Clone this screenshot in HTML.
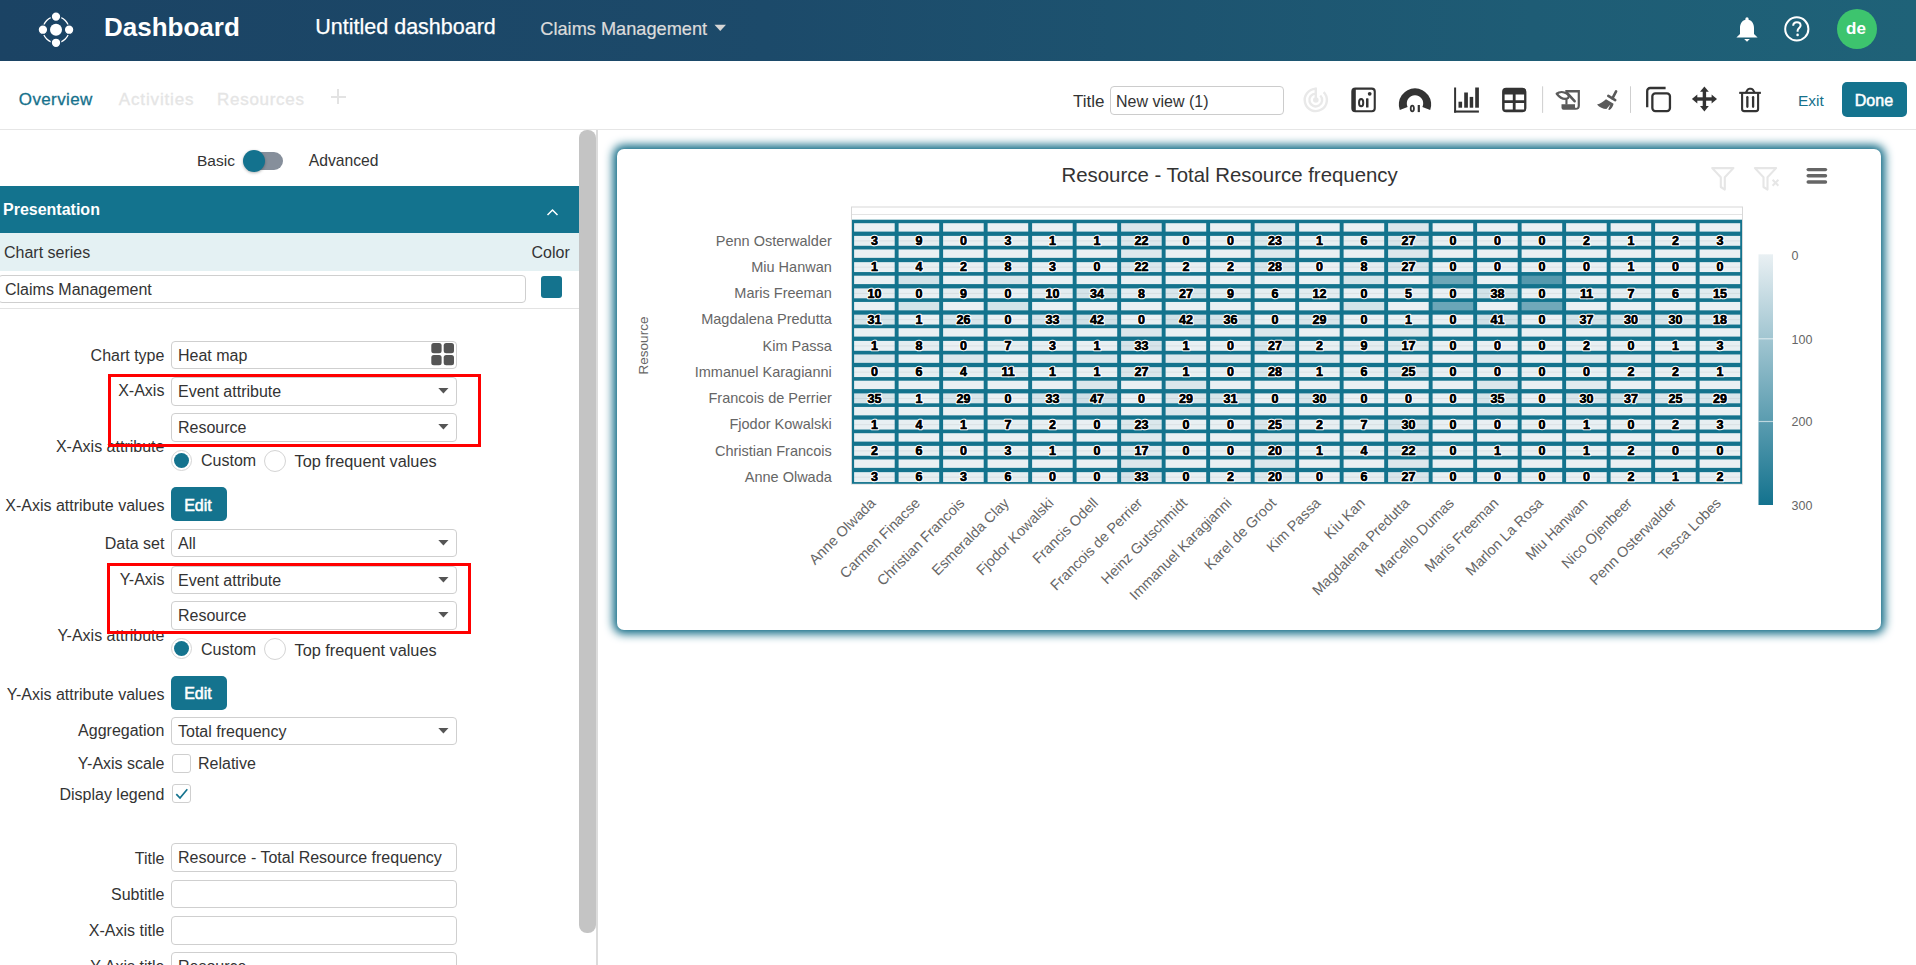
<!DOCTYPE html>
<html><head><meta charset="utf-8"><title>Dashboard</title>
<style>
html,body{margin:0;padding:0;width:1916px;height:965px;overflow:hidden;background:#fff;font-family:"Liberation Sans", sans-serif;}
.t{position:absolute;white-space:nowrap;line-height:1;}
</style></head><body>
<div style="position:absolute;left:0;top:0;width:1916px;height:61px;background:linear-gradient(90deg,#1b4364 0%,#1c4a6a 40%,#1e5c75 80%,#1f6278 100%);"></div>
<svg style="position:absolute;left:0;top:0" width="100" height="61" viewBox="0 0 100 61">
<circle cx="56" cy="29.7" r="13.1" fill="none" stroke="#fff" stroke-width="1.3"/>
<circle cx="56" cy="29.7" r="6" fill="#fff"/>
<circle cx="56" cy="16.6" r="4.85" fill="#fff" stroke="#1b4364" stroke-width="1.4"/>
<circle cx="56" cy="42.8" r="4.85" fill="#fff" stroke="#1b4364" stroke-width="1.4"/>
<circle cx="42.9" cy="29.7" r="4.85" fill="#fff" stroke="#1b4364" stroke-width="1.4"/>
<circle cx="69.1" cy="29.7" r="4.85" fill="#fff" stroke="#1b4364" stroke-width="1.4"/>
</svg>
<div class="t" style="left:104px;top:13.99px;font-size:26px;color:#fff;font-weight:700;">Dashboard</div>
<div class="t" style="left:315.3px;top:16.50px;font-size:21.5px;color:#fff;font-weight:400;-webkit-text-stroke:0.25px #fff;">Untitled dashboard</div>
<div class="t" style="left:540.3px;top:19.89px;font-size:18.2px;color:#dcdcdc;font-weight:400;-webkit-text-stroke:0.2px #dcdcdc;">Claims Management</div>
<svg style="position:absolute;left:714px;top:24px" width="13" height="8"><path d="M0.5 0.8 L12 0.8 L6.25 7 Z" fill="#d6d6d6"/></svg>
<svg style="position:absolute;left:1735px;top:16px" width="24" height="27" viewBox="0 0 24 27">
<path d="M12 1.2 a1.6 1.6 0 0 1 1.6 1.6 l0 0.9 C17.2 4.6 19 8 19 12 L19 18 L22.6 21.6 L1.4 21.6 L5 18 L5 12 C5 8 6.8 4.6 10.4 3.7 L10.4 2.8 A1.6 1.6 0 0 1 12 1.2 Z" fill="#fff"/>
<path d="M9.2 23 L14.8 23 L12 25.8 Z" fill="#fff"/>
</svg>
<svg style="position:absolute;left:1783px;top:15px" width="28" height="28" viewBox="0 0 28 28">
<circle cx="13.8" cy="13.9" r="11.6" fill="none" stroke="#fff" stroke-width="2"/>
<path d="M10.2 10.8 C10.2 8.4 11.9 7.2 13.9 7.2 C16 7.2 17.6 8.5 17.6 10.5 C17.6 12.9 14.6 13.2 14.6 15.8 L14.6 16.8" fill="none" stroke="#fff" stroke-width="2"/>
<circle cx="14.6" cy="19.9" r="1.3" fill="#fff"/>
</svg>
<div style="position:absolute;left:1837px;top:8.9px;width:40px;height:40px;border-radius:50%;background:#3dc46e;"></div>
<div class="t" style="left:1846px;top:20.41px;font-size:17px;color:#fff;font-weight:700;">de</div>
<div style="position:absolute;left:0;top:129px;width:1916px;height:1px;background:#e6e6e6;"></div>
<div class="t" style="left:18.8px;top:91.21px;font-size:17px;color:#16718c;font-weight:400;letter-spacing:0.38px;-webkit-text-stroke:0.3px #16718c;">Overview</div>
<div class="t" style="left:118.8px;top:91.21px;font-size:17px;color:#e5e5e5;font-weight:400;letter-spacing:0.85px;-webkit-text-stroke:0.3px #e5e5e5;">Activities</div>
<div class="t" style="left:217.1px;top:91.21px;font-size:17px;color:#e5e5e5;font-weight:400;letter-spacing:0.7px;-webkit-text-stroke:0.3px #e5e5e5;">Resources</div>
<div style="position:absolute;left:330.5px;top:96px;width:15px;height:1.6px;background:#e3e3e3;"></div>
<div style="position:absolute;left:337.2px;top:89px;width:1.6px;height:15px;background:#e3e3e3;"></div>
<div class="t" style="left:1073px;top:93.11px;font-size:17px;color:#333;font-weight:400;">Title</div>
<div style="position:absolute;left:1109.5px;top:86.3px;width:173px;height:28px;border:1px solid #cccccc;border-radius:4px;box-sizing:border-box;width:174px;height:29px;"></div>
<div class="t" style="left:1116px;top:94.36px;font-size:16px;color:#333;font-weight:400;">New view (1)</div>
<svg style="position:absolute;left:0;top:0;pointer-events:none" width="1916" height="130" viewBox="0 0 1916 130">
<g fill="none" stroke="#e9e9e9" stroke-width="2.4">
  <path d="M1315.8 88.9 A11.1 11.1 0 1 0 1323.6 92.1"/>
  <path d="M1315.8 93.6 A6.4 6.4 0 1 0 1320.3 95.5"/>
  <line x1="1315.8" y1="87.5" x2="1315.8" y2="100"/>
</g>
<circle cx="1315.8" cy="100" r="2.8" fill="#e9e9e9"/>
<g fill="#333">
  <path fill-rule="evenodd" d="M1355.3 87.6 H1371.8 A4 4 0 0 1 1375.8 91.6 V108.2 A4 4 0 0 1 1371.8 112.2 H1355.3 A4 4 0 0 1 1351.3 108.2 V91.6 A4 4 0 0 1 1355.3 87.6 Z M1355.8 89.8 V110.2 H1371.7 A2 2 0 0 0 1373.7 108.2 V91.8 A2 2 0 0 0 1371.7 89.8 Z"/>
  <circle cx="1369.7" cy="93.8" r="1.9"/>
  <ellipse cx="1361.15" cy="102.65" rx="2.1" ry="3.6" fill="none" stroke="#333" stroke-width="2"/>
  <rect x="1366" y="98.3" width="2.5" height="9.2" rx="0.6"/>
  <path d="M1399.8 110.1 A16.2 16.2 0 1 1 1430.2 110.1 L1422.4 106.9 A8.2 8.2 0 1 0 1407.6 106.9 Z"/>
  <ellipse cx="1412.3" cy="108.5" rx="1.6" ry="2.9" fill="none" stroke="#333" stroke-width="1.8"/>
  <rect x="1417.7" y="105" width="2.2" height="7.1"/>
  <rect x="1454.1" y="87.5" width="2" height="25.1"/>
  <rect x="1454.1" y="110.5" width="24.8" height="2.1"/>
  <rect x="1458.5" y="101.7" width="3.6" height="6"/>
  <rect x="1464.2" y="92.5" width="3.7" height="15.2"/>
  <rect x="1469.7" y="96.9" width="3.5" height="10.8"/>
  <rect x="1475.2" y="87.5" width="3.7" height="20.2"/>
  <path fill-rule="evenodd" d="M1506.1 87.8 H1522.4 A4 4 0 0 1 1526.4 91.8 V108.2 A4 4 0 0 1 1522.4 112.2 H1506.1 A4 4 0 0 1 1502.1 108.2 V91.8 A4 4 0 0 1 1506.1 87.8 Z M1504.6 94.4 V100.2 H1512.8 V94.4 Z M1515.6 94.4 V100.2 H1524.1 V94.4 Z M1504.6 103 V109.6 H1512.8 V103 Z M1515.6 103 V109.6 H1524.1 V103 Z"/>
</g>
<rect x="1542.1" y="86.3" width="1" height="26.6" fill="#cfcfcf"/>
<rect x="1630" y="86.3" width="1" height="26.6" fill="#cfcfcf"/>
<g fill="#5a5a5a" stroke="none">
  <path d="M1565.3 90.1 H1579.9 V105.5 Q1579.9 109.8 1575.6 109.8 H1563.5 Q1561.5 109.8 1561.5 107.8 V104.2 H1575 V107 Q1575 107.9 1576 107.9 Q1577.7 107.9 1577.7 106 V92.4 H1565.3 Z"/>
  <rect x="1565.4" y="98.8" width="2.1" height="5.8"/>
</g>
<g fill="none" stroke="#5a5a5a" stroke-linecap="round">
  <line x1="1567" y1="92.8" x2="1574.6" y2="101.2" stroke-width="2.6"/>
  <path d="M1556.7 93.7 C1559.5 91.4 1563.8 91.6 1566.8 93.6 C1569.6 95.4 1569.2 98.1 1566.6 98.7 C1563.2 99.4 1559.6 97.4 1556.7 93.7 Z" stroke-width="2.2" stroke-linejoin="round"/>
  <line x1="1616.1" y1="91.3" x2="1612.4" y2="98.4" stroke-width="2.6"/>
  <line x1="1608.3" y1="95.9" x2="1615.2" y2="100.1" stroke-width="2.6"/>
</g>
<path fill="#5a5a5a" d="M1597 104.4 C1600.5 104 1603 101.6 1606 99.3 L1613.6 103.8 C1613 106.6 1611.5 109 1609.4 109.9 L1608.2 109.6 L1610.4 104.6 L1606.4 109.1 C1603 108.8 1599.6 107.3 1597 104.4 Z"/>
<g fill="none" stroke="#333" stroke-width="2.3">
  <path d="M1647.2 107.3 V91 A3 3 0 0 1 1650.2 88 H1665.6"/>
  <rect x="1652.35" y="93.35" width="17.6" height="17.7" rx="3"/>
</g>
<g fill="#333">
  <rect x="1702.7" y="90" width="3.4" height="18"/>
  <rect x="1695" y="97.3" width="18.8" height="3.4"/>
  <path d="M1704.4 86.4 L1708.8 91.8 L1700 91.8 Z"/>
  <path d="M1704.4 111.5 L1708.8 106.1 L1700 106.1 Z"/>
  <path d="M1691.9 99 L1697.3 94.6 L1697.3 103.4 Z"/>
  <path d="M1717 99 L1711.6 94.6 L1711.6 103.4 Z"/>
</g>
<g fill="none" stroke="#333" stroke-width="2.1">
  <line x1="1739.2" y1="92.85" x2="1760.9" y2="92.85"/>
  <path d="M1746 92.5 L1747.6 89.8 Q1748.2 88.8 1749.4 88.8 H1751.1 Q1752.3 88.8 1752.9 89.8 L1754.5 92.5"/>
  <path d="M1742.1 93 V109 Q1742.1 111.1 1744.2 111.1 H1756 Q1758.1 111.1 1758.1 109 V93"/>
</g>
<g stroke="#333" stroke-width="2.3" stroke-linecap="round">
  <line x1="1747.35" y1="97.2" x2="1747.35" y2="106.8"/>
  <line x1="1753.1" y1="97.2" x2="1753.1" y2="106.8"/>
</g>
</svg>
<div class="t" style="left:1798px;top:92.88px;font-size:15.5px;color:#16718c;font-weight:400;">Exit</div>
<div style="position:absolute;left:1842px;top:82.2px;width:65px;height:34.6px;border-radius:5px;background:#14738e;"></div>
<div class="t" style="left:1854.8px;top:92.66px;font-size:16px;color:#fff;font-weight:400;-webkit-text-stroke:0.55px #fff;">Done</div>
<div class="t" style="left:197px;top:153.48px;font-size:15.5px;color:#333;font-weight:400;">Basic</div>
<div style="position:absolute;left:246.4px;top:152px;width:36.5px;height:17.7px;border-radius:9px;background:#868f9b;"></div>
<div style="position:absolute;left:243px;top:150px;width:22px;height:22px;border-radius:50%;background:#13728e;box-shadow:0 1px 3px rgba(0,0,0,0.3);"></div>
<div class="t" style="left:308.8px;top:153.31px;font-size:15.7px;color:#333;font-weight:400;">Advanced</div>
<div style="position:absolute;left:0;top:186px;width:579px;height:46.7px;background:#13738e;"></div>
<div class="t" style="left:3px;top:202.46px;font-size:16px;color:#fff;font-weight:700;">Presentation</div>
<svg style="position:absolute;left:546px;top:207px" width="13" height="10"><path d="M1.5 8 L6.5 3 L11.5 8" fill="none" stroke="#fff" stroke-width="1.5"/></svg>
<div style="position:absolute;left:0;top:232.7px;width:579px;height:38.2px;background:#e4f1f3;"></div>
<div class="t" style="left:4px;top:244.86px;font-size:16px;color:#333;font-weight:400;">Chart series</div>
<div class="t" style="left:531.5px;top:244.86px;font-size:16px;color:#333;font-weight:400;">Color</div>
<div style="position:absolute;left:-2px;top:274.7px;width:527.5px;height:28.5px;border:1px solid #cfcfcf;border-radius:4px;box-sizing:border-box;background:#fff;"></div>
<div class="t" style="left:5px;top:281.96px;font-size:16px;color:#333;font-weight:400;">Claims Management</div>
<div style="position:absolute;left:541.2px;top:276.3px;width:21.3px;height:21.3px;border-radius:3px;background:#14738e;"></div>
<div style="position:absolute;left:0;top:308px;width:579px;height:1px;background:#e3e3e3;"></div>
<div class="t" style="left:-835.6px;width:1000px;text-align:right;top:347.56px;font-size:16px;color:#333;font-weight:400;">Chart type</div>
<div style="position:absolute;left:171.4px;top:340.6px;width:286.0px;height:28.6px;border:1px solid #cfcfcf;border-radius:4px;box-sizing:border-box;background:#fff;"></div><div class="t" style="left:178px;top:347.66px;font-size:16px;color:#333;font-weight:400;">Heat map</div><svg style="position:absolute;left:431px;top:343.20000000000005px" width="24" height="23"><g fill="#555">
<rect x="0.3" y="0" width="10.3" height="10.3" rx="2.5"/><rect x="12.7" y="0" width="10.3" height="10.3" rx="2.5"/>
<rect x="0.3" y="12" width="10.3" height="10.3" rx="2.5"/><rect x="12.7" y="12" width="10.3" height="10.3" rx="2.5"/></g></svg>
<div class="t" style="left:-835.6px;width:1000px;text-align:right;top:383.26px;font-size:16px;color:#333;font-weight:400;">X-Axis</div>
<div style="position:absolute;left:171.4px;top:377.4px;width:286.0px;height:28.6px;border:1px solid #cfcfcf;border-radius:4px;box-sizing:border-box;background:#fff;"></div><div class="t" style="left:178px;top:384.46px;font-size:16px;color:#333;font-weight:400;">Event attribute</div><svg style="position:absolute;left:437.5px;top:388.4px" width="11" height="6"><path d="M0.3 0 L10.5 0 L5.4 5.6 Z" fill="#555"/></svg>
<div style="position:absolute;left:171.4px;top:413.2px;width:286.0px;height:28.6px;border:1px solid #cfcfcf;border-radius:4px;box-sizing:border-box;background:#fff;"></div><div class="t" style="left:178px;top:420.26px;font-size:16px;color:#333;font-weight:400;">Resource</div><svg style="position:absolute;left:437.5px;top:424.2px" width="11" height="6"><path d="M0.3 0 L10.5 0 L5.4 5.6 Z" fill="#555"/></svg>
<div class="t" style="left:-835.6px;width:1000px;text-align:right;top:439.26px;font-size:16px;color:#333;font-weight:400;">X-Axis attribute</div>
<div style="position:absolute;left:171.4px;top:449.7px;width:21px;height:21px;border-radius:50%;border:1px solid #d4d4d4;box-sizing:border-box;background:#fff;"></div><div style="position:absolute;left:174.4px;top:452.7px;width:15px;height:15px;border-radius:50%;background:#14738e;"></div><div class="t" style="left:201px;top:453.26px;font-size:16px;color:#333;font-weight:400;">Custom</div><div style="position:absolute;left:264px;top:449.7px;width:22px;height:22px;border-radius:50%;border:1px solid #d4d4d4;box-sizing:border-box;background:#fff;"></div><div class="t" style="left:294.5px;top:453.00px;font-size:16.3px;color:#333;font-weight:400;">Top frequent values</div>
<div class="t" style="left:-835.6px;width:1000px;text-align:right;top:497.96px;font-size:16px;color:#333;font-weight:400;">X-Axis attribute values</div>
<div style="position:absolute;left:171.1px;top:487px;width:55.7px;height:34px;border-radius:5px;background:#14738e;"></div><div class="t" style="left:184.2px;top:497.66px;font-size:16px;color:#fff;font-weight:400;-webkit-text-stroke:0.55px #fff;">Edit</div>
<div class="t" style="left:-835.6px;width:1000px;text-align:right;top:535.56px;font-size:16px;color:#333;font-weight:400;">Data set</div>
<div style="position:absolute;left:171.4px;top:528.5px;width:286.0px;height:28.6px;border:1px solid #cfcfcf;border-radius:4px;box-sizing:border-box;background:#fff;"></div><div class="t" style="left:178px;top:535.56px;font-size:16px;color:#333;font-weight:400;">All</div><svg style="position:absolute;left:437.5px;top:539.5px" width="11" height="6"><path d="M0.3 0 L10.5 0 L5.4 5.6 Z" fill="#555"/></svg>
<div class="t" style="left:-835.6px;width:1000px;text-align:right;top:572.16px;font-size:16px;color:#333;font-weight:400;">Y-Axis</div>
<div style="position:absolute;left:171.4px;top:565.6px;width:286.0px;height:28.6px;border:1px solid #cfcfcf;border-radius:4px;box-sizing:border-box;background:#fff;"></div><div class="t" style="left:178px;top:572.66px;font-size:16px;color:#333;font-weight:400;">Event attribute</div><svg style="position:absolute;left:437.5px;top:576.6px" width="11" height="6"><path d="M0.3 0 L10.5 0 L5.4 5.6 Z" fill="#555"/></svg>
<div style="position:absolute;left:171.4px;top:601.4px;width:286.0px;height:28.6px;border:1px solid #cfcfcf;border-radius:4px;box-sizing:border-box;background:#fff;"></div><div class="t" style="left:178px;top:608.46px;font-size:16px;color:#333;font-weight:400;">Resource</div><svg style="position:absolute;left:437.5px;top:612.4px" width="11" height="6"><path d="M0.3 0 L10.5 0 L5.4 5.6 Z" fill="#555"/></svg>
<div class="t" style="left:-835.6px;width:1000px;text-align:right;top:627.66px;font-size:16px;color:#333;font-weight:400;">Y-Axis attribute</div>
<div style="position:absolute;left:171.4px;top:638.2px;width:21px;height:21px;border-radius:50%;border:1px solid #d4d4d4;box-sizing:border-box;background:#fff;"></div><div style="position:absolute;left:174.4px;top:641.2px;width:15px;height:15px;border-radius:50%;background:#14738e;"></div><div class="t" style="left:201px;top:641.76px;font-size:16px;color:#333;font-weight:400;">Custom</div><div style="position:absolute;left:264px;top:638.2px;width:22px;height:22px;border-radius:50%;border:1px solid #d4d4d4;box-sizing:border-box;background:#fff;"></div><div class="t" style="left:294.5px;top:641.50px;font-size:16.3px;color:#333;font-weight:400;">Top frequent values</div>
<div class="t" style="left:-835.6px;width:1000px;text-align:right;top:686.56px;font-size:16px;color:#333;font-weight:400;">Y-Axis attribute values</div>
<div style="position:absolute;left:171.1px;top:675.8px;width:55.7px;height:34px;border-radius:5px;background:#14738e;"></div><div class="t" style="left:184.2px;top:686.46px;font-size:16px;color:#fff;font-weight:400;-webkit-text-stroke:0.55px #fff;">Edit</div>
<div class="t" style="left:-835.6px;width:1000px;text-align:right;top:723.46px;font-size:16px;color:#333;font-weight:400;">Aggregation</div>
<div style="position:absolute;left:171.4px;top:716.5px;width:286.0px;height:28.6px;border:1px solid #cfcfcf;border-radius:4px;box-sizing:border-box;background:#fff;"></div><div class="t" style="left:178px;top:723.56px;font-size:16px;color:#333;font-weight:400;">Total frequency</div><svg style="position:absolute;left:437.5px;top:727.5px" width="11" height="6"><path d="M0.3 0 L10.5 0 L5.4 5.6 Z" fill="#555"/></svg>
<div class="t" style="left:-835.6px;width:1000px;text-align:right;top:756.46px;font-size:16px;color:#333;font-weight:400;">Y-Axis scale</div>
<div style="position:absolute;left:171.6px;top:753.5px;width:19.3px;height:19.3px;border:1px solid #cfcfcf;border-radius:3px;box-sizing:border-box;background:#fff;"></div>
<div class="t" style="left:198px;top:756.46px;font-size:16px;color:#333;font-weight:400;">Relative</div>
<div class="t" style="left:-835.6px;width:1000px;text-align:right;top:787.46px;font-size:16px;color:#333;font-weight:400;">Display legend</div>
<div style="position:absolute;left:171.6px;top:783.7px;width:19.3px;height:19.3px;border:1px solid #cfcfcf;border-radius:3px;box-sizing:border-box;background:#fff;"></div>
<svg style="position:absolute;left:171.6px;top:783.7px" width="20" height="20"><path d="M4.3 10.2 L8 14 L15.3 5.3" fill="none" stroke="#14738e" stroke-width="1.7"/></svg>
<div class="t" style="left:-835.6px;width:1000px;text-align:right;top:850.66px;font-size:16px;color:#333;font-weight:400;">Title</div>
<div style="position:absolute;left:171.4px;top:843.3px;width:286.0px;height:28.6px;border:1px solid #cfcfcf;border-radius:4px;box-sizing:border-box;background:#fff;"></div><div class="t" style="left:178px;top:850.36px;font-size:16px;color:#333;font-weight:400;">Resource - Total Resource frequency</div>
<div class="t" style="left:-835.6px;width:1000px;text-align:right;top:886.96px;font-size:16px;color:#333;font-weight:400;">Subtitle</div>
<div style="position:absolute;left:171.4px;top:879.8px;width:286.0px;height:28.6px;border:1px solid #cfcfcf;border-radius:4px;box-sizing:border-box;background:#fff;"></div>
<div class="t" style="left:-835.6px;width:1000px;text-align:right;top:922.96px;font-size:16px;color:#333;font-weight:400;">X-Axis title</div>
<div style="position:absolute;left:171.4px;top:916.1px;width:286.0px;height:28.6px;border:1px solid #cfcfcf;border-radius:4px;box-sizing:border-box;background:#fff;"></div>
<div class="t" style="left:-835.6px;width:1000px;text-align:right;top:958.96px;font-size:16px;color:#333;font-weight:400;">Y-Axis title</div>
<div style="position:absolute;left:171.4px;top:952.3px;width:286.0px;height:28.6px;border:1px solid #cfcfcf;border-radius:4px;box-sizing:border-box;background:#fff;"></div><div class="t" style="left:178px;top:959.36px;font-size:16px;color:#333;font-weight:400;">Resource</div>
<div style="position:absolute;left:107.6px;top:373.8px;width:373.8px;height:73.1px;border:3px solid #ff0000;box-sizing:border-box;"></div>
<div style="position:absolute;left:106.9px;top:562.8px;width:364.5px;height:70.9px;border:3px solid #ff0000;box-sizing:border-box;"></div>
<div style="position:absolute;left:579.3px;top:130px;width:16.4px;height:802.7px;border-radius:8px 8px 8px 8px;background:#c4c4c4;"></div>
<div style="position:absolute;left:596px;top:130px;width:1.6px;height:835px;background:#dcdcdc;"></div>
<div style="position:absolute;left:617px;top:148.6px;width:1264.2px;height:481.6px;border-radius:7px;background:#fff;box-shadow:0 0 10px 4px rgb(15,106,133);"></div>
<div class="t" style="left:1061.5px;top:164.63px;font-size:20.4px;color:#333;font-weight:400;">Resource - Total Resource frequency</div>
<svg style="position:absolute;left:1700px;top:155px" width="140" height="45" viewBox="1700 155 140 45">
<g fill="none" stroke="#e6e6e6" stroke-width="2.1" stroke-linejoin="round">
 <path d="M1712.2 168.1 H1733.4 L1724.8 177.3 V189.6 L1720.8 187 V177.3 Z"/>
 <path d="M1754.9 168.1 H1776.1 L1767.5 177.3 V189.6 L1763.5 187 V177.3 Z"/>
</g>
<g stroke="#e6e6e6" stroke-width="2" >
 <line x1="1772.6" y1="179.7" x2="1778.4" y2="185.8"/><line x1="1778.4" y1="179.7" x2="1772.6" y2="185.8"/>
</g>
<g stroke="#666" stroke-width="3.4" stroke-linecap="round">
 <line x1="1808.2" y1="169.6" x2="1825.5" y2="169.6"/>
 <line x1="1808.2" y1="175.8" x2="1825.5" y2="175.8"/>
 <line x1="1808.2" y1="182" x2="1825.5" y2="182"/>
</g>
</svg>
<svg style="position:absolute;left:0;top:0" width="1916" height="965" viewBox="0 0 1916 965">
<rect x="851.5" y="207" width="891" height="277" fill="#fff" stroke="#d8d8d8" stroke-width="1"/>
<line x1="852" y1="214.5" x2="1742" y2="214.5" stroke="#e4e4e4" stroke-width="1"/>
<rect x="852" y="219.7" width="890" height="264.1" fill="#13738d"/>
<rect x="854.10" y="223.20" width="40.6" height="8.4" fill="#e9f0f3"/>
<rect x="854.10" y="235.90" width="40.6" height="9.9" fill="#e7eff2"/>
<rect x="854.10" y="240.40" width="40.6" height="1" fill="rgba(0,0,0,0.06)"/>
<rect x="898.60" y="223.20" width="40.6" height="8.4" fill="#e9f0f3"/>
<rect x="898.60" y="235.90" width="40.6" height="9.9" fill="#e4edf0"/>
<rect x="898.60" y="240.40" width="40.6" height="1" fill="rgba(0,0,0,0.06)"/>
<rect x="943.10" y="223.20" width="40.6" height="8.4" fill="#e9f0f3"/>
<rect x="943.10" y="235.90" width="40.6" height="9.9" fill="#e9f0f3"/>
<rect x="943.10" y="240.40" width="40.6" height="1" fill="rgba(0,0,0,0.06)"/>
<rect x="987.60" y="223.20" width="40.6" height="8.4" fill="#e9f0f3"/>
<rect x="987.60" y="235.90" width="40.6" height="9.9" fill="#e7eff2"/>
<rect x="987.60" y="240.40" width="40.6" height="1" fill="rgba(0,0,0,0.06)"/>
<rect x="1032.10" y="223.20" width="40.6" height="8.4" fill="#e9f0f3"/>
<rect x="1032.10" y="235.90" width="40.6" height="9.9" fill="#e8f0f3"/>
<rect x="1032.10" y="240.40" width="40.6" height="1" fill="rgba(0,0,0,0.06)"/>
<rect x="1076.60" y="223.20" width="40.6" height="8.4" fill="#e9f0f3"/>
<rect x="1076.60" y="235.90" width="40.6" height="9.9" fill="#e8f0f3"/>
<rect x="1076.60" y="240.40" width="40.6" height="1" fill="rgba(0,0,0,0.06)"/>
<rect x="1121.10" y="223.20" width="40.6" height="8.4" fill="#dae7ec"/>
<rect x="1121.10" y="235.90" width="40.6" height="9.9" fill="#dce8ed"/>
<rect x="1121.10" y="240.40" width="40.6" height="1" fill="rgba(0,0,0,0.06)"/>
<rect x="1165.60" y="223.20" width="40.6" height="8.4" fill="#e9f0f3"/>
<rect x="1165.60" y="235.90" width="40.6" height="9.9" fill="#e9f0f3"/>
<rect x="1165.60" y="240.40" width="40.6" height="1" fill="rgba(0,0,0,0.06)"/>
<rect x="1210.10" y="223.20" width="40.6" height="8.4" fill="#e9f0f3"/>
<rect x="1210.10" y="235.90" width="40.6" height="9.9" fill="#e9f0f3"/>
<rect x="1210.10" y="240.40" width="40.6" height="1" fill="rgba(0,0,0,0.06)"/>
<rect x="1254.60" y="223.20" width="40.6" height="8.4" fill="#dde9ed"/>
<rect x="1254.60" y="235.90" width="40.6" height="9.9" fill="#dbe8ec"/>
<rect x="1254.60" y="240.40" width="40.6" height="1" fill="rgba(0,0,0,0.06)"/>
<rect x="1299.10" y="223.20" width="40.6" height="8.4" fill="#e9f0f3"/>
<rect x="1299.10" y="235.90" width="40.6" height="9.9" fill="#e8f0f3"/>
<rect x="1299.10" y="240.40" width="40.6" height="1" fill="rgba(0,0,0,0.06)"/>
<rect x="1343.60" y="223.20" width="40.6" height="8.4" fill="#e9f0f3"/>
<rect x="1343.60" y="235.90" width="40.6" height="9.9" fill="#e5eef1"/>
<rect x="1343.60" y="240.40" width="40.6" height="1" fill="rgba(0,0,0,0.06)"/>
<rect x="1388.10" y="223.20" width="40.6" height="8.4" fill="#dae7ec"/>
<rect x="1388.10" y="235.90" width="40.6" height="9.9" fill="#d9e6eb"/>
<rect x="1388.10" y="240.40" width="40.6" height="1" fill="rgba(0,0,0,0.06)"/>
<rect x="1432.60" y="223.20" width="40.6" height="8.4" fill="#e9f0f3"/>
<rect x="1432.60" y="235.90" width="40.6" height="9.9" fill="#e9f0f3"/>
<rect x="1432.60" y="240.40" width="40.6" height="1" fill="rgba(0,0,0,0.06)"/>
<rect x="1477.10" y="223.20" width="40.6" height="8.4" fill="#e9f0f3"/>
<rect x="1477.10" y="235.90" width="40.6" height="9.9" fill="#e9f0f3"/>
<rect x="1477.10" y="240.40" width="40.6" height="1" fill="rgba(0,0,0,0.06)"/>
<rect x="1521.60" y="223.20" width="40.6" height="8.4" fill="#e9f0f3"/>
<rect x="1521.60" y="235.90" width="40.6" height="9.9" fill="#e9f0f3"/>
<rect x="1521.60" y="240.40" width="40.6" height="1" fill="rgba(0,0,0,0.06)"/>
<rect x="1566.10" y="223.20" width="40.6" height="8.4" fill="#e9f0f3"/>
<rect x="1566.10" y="235.90" width="40.6" height="9.9" fill="#e8eff2"/>
<rect x="1566.10" y="240.40" width="40.6" height="1" fill="rgba(0,0,0,0.06)"/>
<rect x="1610.60" y="223.20" width="40.6" height="8.4" fill="#e9f0f3"/>
<rect x="1610.60" y="235.90" width="40.6" height="9.9" fill="#e8f0f3"/>
<rect x="1610.60" y="240.40" width="40.6" height="1" fill="rgba(0,0,0,0.06)"/>
<rect x="1655.10" y="223.20" width="40.6" height="8.4" fill="#e9f0f3"/>
<rect x="1655.10" y="235.90" width="40.6" height="9.9" fill="#e8eff2"/>
<rect x="1655.10" y="240.40" width="40.6" height="1" fill="rgba(0,0,0,0.06)"/>
<rect x="1699.60" y="223.20" width="40.6" height="8.4" fill="#e9f0f3"/>
<rect x="1699.60" y="235.90" width="40.6" height="9.9" fill="#e7eff2"/>
<rect x="1699.60" y="240.40" width="40.6" height="1" fill="rgba(0,0,0,0.06)"/>
<rect x="854.10" y="249.45" width="40.6" height="8.4" fill="#e9f0f3"/>
<rect x="854.10" y="262.15" width="40.6" height="9.9" fill="#e8f0f3"/>
<rect x="854.10" y="266.65" width="40.6" height="1" fill="rgba(0,0,0,0.06)"/>
<rect x="898.60" y="249.45" width="40.6" height="8.4" fill="#e9f0f3"/>
<rect x="898.60" y="262.15" width="40.6" height="9.9" fill="#e7eff2"/>
<rect x="898.60" y="266.65" width="40.6" height="1" fill="rgba(0,0,0,0.06)"/>
<rect x="943.10" y="249.45" width="40.6" height="8.4" fill="#e9f0f3"/>
<rect x="943.10" y="262.15" width="40.6" height="9.9" fill="#e8eff2"/>
<rect x="943.10" y="266.65" width="40.6" height="1" fill="rgba(0,0,0,0.06)"/>
<rect x="987.60" y="249.45" width="40.6" height="8.4" fill="#e9f0f3"/>
<rect x="987.60" y="262.15" width="40.6" height="9.9" fill="#e4edf1"/>
<rect x="987.60" y="266.65" width="40.6" height="1" fill="rgba(0,0,0,0.06)"/>
<rect x="1032.10" y="249.45" width="40.6" height="8.4" fill="#e9f0f3"/>
<rect x="1032.10" y="262.15" width="40.6" height="9.9" fill="#e7eff2"/>
<rect x="1032.10" y="266.65" width="40.6" height="1" fill="rgba(0,0,0,0.06)"/>
<rect x="1076.60" y="249.45" width="40.6" height="8.4" fill="#e9f0f3"/>
<rect x="1076.60" y="262.15" width="40.6" height="9.9" fill="#e9f0f3"/>
<rect x="1076.60" y="266.65" width="40.6" height="1" fill="rgba(0,0,0,0.06)"/>
<rect x="1121.10" y="249.45" width="40.6" height="8.4" fill="#dde9ed"/>
<rect x="1121.10" y="262.15" width="40.6" height="9.9" fill="#dce8ed"/>
<rect x="1121.10" y="266.65" width="40.6" height="1" fill="rgba(0,0,0,0.06)"/>
<rect x="1165.60" y="249.45" width="40.6" height="8.4" fill="#e9f0f3"/>
<rect x="1165.60" y="262.15" width="40.6" height="9.9" fill="#e8eff2"/>
<rect x="1165.60" y="266.65" width="40.6" height="1" fill="rgba(0,0,0,0.06)"/>
<rect x="1210.10" y="249.45" width="40.6" height="8.4" fill="#e9f0f3"/>
<rect x="1210.10" y="262.15" width="40.6" height="9.9" fill="#e8eff2"/>
<rect x="1210.10" y="266.65" width="40.6" height="1" fill="rgba(0,0,0,0.06)"/>
<rect x="1254.60" y="249.45" width="40.6" height="8.4" fill="#dde9ed"/>
<rect x="1254.60" y="262.15" width="40.6" height="9.9" fill="#d8e6eb"/>
<rect x="1254.60" y="266.65" width="40.6" height="1" fill="rgba(0,0,0,0.06)"/>
<rect x="1299.10" y="249.45" width="40.6" height="8.4" fill="#e9f0f3"/>
<rect x="1299.10" y="262.15" width="40.6" height="9.9" fill="#e9f0f3"/>
<rect x="1299.10" y="266.65" width="40.6" height="1" fill="rgba(0,0,0,0.06)"/>
<rect x="1343.60" y="249.45" width="40.6" height="8.4" fill="#e9f0f3"/>
<rect x="1343.60" y="262.15" width="40.6" height="9.9" fill="#e4edf1"/>
<rect x="1343.60" y="266.65" width="40.6" height="1" fill="rgba(0,0,0,0.06)"/>
<rect x="1388.10" y="249.45" width="40.6" height="8.4" fill="#dae7ec"/>
<rect x="1388.10" y="262.15" width="40.6" height="9.9" fill="#d9e6eb"/>
<rect x="1388.10" y="266.65" width="40.6" height="1" fill="rgba(0,0,0,0.06)"/>
<rect x="1432.60" y="249.45" width="40.6" height="8.4" fill="#e9f0f3"/>
<rect x="1432.60" y="262.15" width="40.6" height="9.9" fill="#e9f0f3"/>
<rect x="1432.60" y="266.65" width="40.6" height="1" fill="rgba(0,0,0,0.06)"/>
<rect x="1477.10" y="249.45" width="40.6" height="8.4" fill="#e9f0f3"/>
<rect x="1477.10" y="262.15" width="40.6" height="9.9" fill="#e9f0f3"/>
<rect x="1477.10" y="266.65" width="40.6" height="1" fill="rgba(0,0,0,0.06)"/>
<rect x="1521.60" y="249.45" width="40.6" height="8.4" fill="#e9f0f3"/>
<rect x="1521.60" y="262.15" width="40.6" height="9.9" fill="#e9f0f3"/>
<rect x="1521.60" y="266.65" width="40.6" height="1" fill="rgba(0,0,0,0.06)"/>
<rect x="1566.10" y="249.45" width="40.6" height="8.4" fill="#e9f0f3"/>
<rect x="1566.10" y="262.15" width="40.6" height="9.9" fill="#e9f0f3"/>
<rect x="1566.10" y="266.65" width="40.6" height="1" fill="rgba(0,0,0,0.06)"/>
<rect x="1610.60" y="249.45" width="40.6" height="8.4" fill="#e9f0f3"/>
<rect x="1610.60" y="262.15" width="40.6" height="9.9" fill="#e8f0f3"/>
<rect x="1610.60" y="266.65" width="40.6" height="1" fill="rgba(0,0,0,0.06)"/>
<rect x="1655.10" y="249.45" width="40.6" height="8.4" fill="#e9f0f3"/>
<rect x="1655.10" y="262.15" width="40.6" height="9.9" fill="#e9f0f3"/>
<rect x="1655.10" y="266.65" width="40.6" height="1" fill="rgba(0,0,0,0.06)"/>
<rect x="1699.60" y="249.45" width="40.6" height="8.4" fill="#e9f0f3"/>
<rect x="1699.60" y="262.15" width="40.6" height="9.9" fill="#e9f0f3"/>
<rect x="1699.60" y="266.65" width="40.6" height="1" fill="rgba(0,0,0,0.06)"/>
<rect x="854.10" y="275.70" width="40.6" height="8.4" fill="#e9f0f3"/>
<rect x="854.10" y="288.40" width="40.6" height="9.9" fill="#e3ecf0"/>
<rect x="854.10" y="292.90" width="40.6" height="1" fill="rgba(0,0,0,0.06)"/>
<rect x="898.60" y="275.70" width="40.6" height="8.4" fill="#d1e2e8"/>
<rect x="898.60" y="288.40" width="40.6" height="9.9" fill="#e9f0f3"/>
<rect x="898.60" y="292.90" width="40.6" height="1" fill="rgba(0,0,0,0.06)"/>
<rect x="943.10" y="275.70" width="40.6" height="8.4" fill="#e9f0f3"/>
<rect x="943.10" y="288.40" width="40.6" height="9.9" fill="#e4edf0"/>
<rect x="943.10" y="292.90" width="40.6" height="1" fill="rgba(0,0,0,0.06)"/>
<rect x="987.60" y="275.70" width="40.6" height="8.4" fill="#d7e5ea"/>
<rect x="987.60" y="288.40" width="40.6" height="9.9" fill="#e9f0f3"/>
<rect x="987.60" y="292.90" width="40.6" height="1" fill="rgba(0,0,0,0.06)"/>
<rect x="1032.10" y="275.70" width="40.6" height="8.4" fill="#e9f0f3"/>
<rect x="1032.10" y="288.40" width="40.6" height="9.9" fill="#e3ecf0"/>
<rect x="1032.10" y="292.90" width="40.6" height="1" fill="rgba(0,0,0,0.06)"/>
<rect x="1076.60" y="275.70" width="40.6" height="8.4" fill="#e9f0f3"/>
<rect x="1076.60" y="288.40" width="40.6" height="9.9" fill="#d5e4e9"/>
<rect x="1076.60" y="292.90" width="40.6" height="1" fill="rgba(0,0,0,0.06)"/>
<rect x="1121.10" y="275.70" width="40.6" height="8.4" fill="#e9f0f3"/>
<rect x="1121.10" y="288.40" width="40.6" height="9.9" fill="#e4edf1"/>
<rect x="1121.10" y="292.90" width="40.6" height="1" fill="rgba(0,0,0,0.06)"/>
<rect x="1165.60" y="275.70" width="40.6" height="8.4" fill="#e9f0f3"/>
<rect x="1165.60" y="288.40" width="40.6" height="9.9" fill="#d9e6eb"/>
<rect x="1165.60" y="292.90" width="40.6" height="1" fill="rgba(0,0,0,0.06)"/>
<rect x="1210.10" y="275.70" width="40.6" height="8.4" fill="#e9f0f3"/>
<rect x="1210.10" y="288.40" width="40.6" height="9.9" fill="#e4edf0"/>
<rect x="1210.10" y="292.90" width="40.6" height="1" fill="rgba(0,0,0,0.06)"/>
<rect x="1254.60" y="275.70" width="40.6" height="8.4" fill="#e9f0f3"/>
<rect x="1254.60" y="288.40" width="40.6" height="9.9" fill="#e5eef1"/>
<rect x="1254.60" y="292.90" width="40.6" height="1" fill="rgba(0,0,0,0.06)"/>
<rect x="1299.10" y="275.70" width="40.6" height="8.4" fill="#e9f0f3"/>
<rect x="1299.10" y="288.40" width="40.6" height="9.9" fill="#e2ecf0"/>
<rect x="1299.10" y="292.90" width="40.6" height="1" fill="rgba(0,0,0,0.06)"/>
<rect x="1343.60" y="275.70" width="40.6" height="8.4" fill="#d4e4e9"/>
<rect x="1343.60" y="288.40" width="40.6" height="9.9" fill="#e9f0f3"/>
<rect x="1343.60" y="292.90" width="40.6" height="1" fill="rgba(0,0,0,0.06)"/>
<rect x="1388.10" y="275.70" width="40.6" height="8.4" fill="#e9f0f3"/>
<rect x="1388.10" y="288.40" width="40.6" height="9.9" fill="#e6eef2"/>
<rect x="1388.10" y="292.90" width="40.6" height="1" fill="rgba(0,0,0,0.06)"/>
<rect x="1432.60" y="275.70" width="40.6" height="8.4" fill="#6da7b8"/>
<rect x="1432.60" y="288.40" width="40.6" height="9.9" fill="#e9f0f3"/>
<rect x="1432.60" y="292.90" width="40.6" height="1" fill="rgba(0,0,0,0.06)"/>
<rect x="1477.10" y="275.70" width="40.6" height="8.4" fill="#e9f0f3"/>
<rect x="1477.10" y="288.40" width="40.6" height="9.9" fill="#d2e3e8"/>
<rect x="1477.10" y="292.90" width="40.6" height="1" fill="rgba(0,0,0,0.06)"/>
<rect x="1521.60" y="275.70" width="40.6" height="8.4" fill="#5599ad"/>
<rect x="1521.60" y="288.40" width="40.6" height="9.9" fill="#e9f0f3"/>
<rect x="1521.60" y="292.90" width="40.6" height="1" fill="rgba(0,0,0,0.06)"/>
<rect x="1566.10" y="275.70" width="40.6" height="8.4" fill="#e9f0f3"/>
<rect x="1566.10" y="288.40" width="40.6" height="9.9" fill="#e2ecf0"/>
<rect x="1566.10" y="292.90" width="40.6" height="1" fill="rgba(0,0,0,0.06)"/>
<rect x="1610.60" y="275.70" width="40.6" height="8.4" fill="#e9f0f3"/>
<rect x="1610.60" y="288.40" width="40.6" height="9.9" fill="#e5eef1"/>
<rect x="1610.60" y="292.90" width="40.6" height="1" fill="rgba(0,0,0,0.06)"/>
<rect x="1655.10" y="275.70" width="40.6" height="8.4" fill="#e9f0f3"/>
<rect x="1655.10" y="288.40" width="40.6" height="9.9" fill="#e5eef1"/>
<rect x="1655.10" y="292.90" width="40.6" height="1" fill="rgba(0,0,0,0.06)"/>
<rect x="1699.60" y="275.70" width="40.6" height="8.4" fill="#e9f0f3"/>
<rect x="1699.60" y="288.40" width="40.6" height="9.9" fill="#e0ebef"/>
<rect x="1699.60" y="292.90" width="40.6" height="1" fill="rgba(0,0,0,0.06)"/>
<rect x="854.10" y="301.95" width="40.6" height="8.4" fill="#e9f0f3"/>
<rect x="854.10" y="314.65" width="40.6" height="9.9" fill="#d6e5ea"/>
<rect x="854.10" y="319.15" width="40.6" height="1" fill="rgba(0,0,0,0.06)"/>
<rect x="898.60" y="301.95" width="40.6" height="8.4" fill="#d4e4e9"/>
<rect x="898.60" y="314.65" width="40.6" height="9.9" fill="#e8f0f3"/>
<rect x="898.60" y="319.15" width="40.6" height="1" fill="rgba(0,0,0,0.06)"/>
<rect x="943.10" y="301.95" width="40.6" height="8.4" fill="#e9f0f3"/>
<rect x="943.10" y="314.65" width="40.6" height="9.9" fill="#d9e7ec"/>
<rect x="943.10" y="319.15" width="40.6" height="1" fill="rgba(0,0,0,0.06)"/>
<rect x="987.60" y="301.95" width="40.6" height="8.4" fill="#d4e4e9"/>
<rect x="987.60" y="314.65" width="40.6" height="9.9" fill="#e9f0f3"/>
<rect x="987.60" y="319.15" width="40.6" height="1" fill="rgba(0,0,0,0.06)"/>
<rect x="1032.10" y="301.95" width="40.6" height="8.4" fill="#e9f0f3"/>
<rect x="1032.10" y="314.65" width="40.6" height="9.9" fill="#d5e4ea"/>
<rect x="1032.10" y="319.15" width="40.6" height="1" fill="rgba(0,0,0,0.06)"/>
<rect x="1076.60" y="301.95" width="40.6" height="8.4" fill="#e9f0f3"/>
<rect x="1076.60" y="314.65" width="40.6" height="9.9" fill="#d0e1e7"/>
<rect x="1076.60" y="319.15" width="40.6" height="1" fill="rgba(0,0,0,0.06)"/>
<rect x="1121.10" y="301.95" width="40.6" height="8.4" fill="#e9f0f3"/>
<rect x="1121.10" y="314.65" width="40.6" height="9.9" fill="#e9f0f3"/>
<rect x="1121.10" y="319.15" width="40.6" height="1" fill="rgba(0,0,0,0.06)"/>
<rect x="1165.60" y="301.95" width="40.6" height="8.4" fill="#e9f0f3"/>
<rect x="1165.60" y="314.65" width="40.6" height="9.9" fill="#d0e1e7"/>
<rect x="1165.60" y="319.15" width="40.6" height="1" fill="rgba(0,0,0,0.06)"/>
<rect x="1210.10" y="301.95" width="40.6" height="8.4" fill="#e9f0f3"/>
<rect x="1210.10" y="314.65" width="40.6" height="9.9" fill="#d3e3e9"/>
<rect x="1210.10" y="319.15" width="40.6" height="1" fill="rgba(0,0,0,0.06)"/>
<rect x="1254.60" y="301.95" width="40.6" height="8.4" fill="#e9f0f3"/>
<rect x="1254.60" y="314.65" width="40.6" height="9.9" fill="#e9f0f3"/>
<rect x="1254.60" y="319.15" width="40.6" height="1" fill="rgba(0,0,0,0.06)"/>
<rect x="1299.10" y="301.95" width="40.6" height="8.4" fill="#e9f0f3"/>
<rect x="1299.10" y="314.65" width="40.6" height="9.9" fill="#d8e6eb"/>
<rect x="1299.10" y="319.15" width="40.6" height="1" fill="rgba(0,0,0,0.06)"/>
<rect x="1343.60" y="301.95" width="40.6" height="8.4" fill="#d4e4e9"/>
<rect x="1343.60" y="314.65" width="40.6" height="9.9" fill="#e9f0f3"/>
<rect x="1343.60" y="319.15" width="40.6" height="1" fill="rgba(0,0,0,0.06)"/>
<rect x="1388.10" y="301.95" width="40.6" height="8.4" fill="#e9f0f3"/>
<rect x="1388.10" y="314.65" width="40.6" height="9.9" fill="#e8f0f3"/>
<rect x="1388.10" y="319.15" width="40.6" height="1" fill="rgba(0,0,0,0.06)"/>
<rect x="1432.60" y="301.95" width="40.6" height="8.4" fill="#6ba6b8"/>
<rect x="1432.60" y="314.65" width="40.6" height="9.9" fill="#e9f0f3"/>
<rect x="1432.60" y="319.15" width="40.6" height="1" fill="rgba(0,0,0,0.06)"/>
<rect x="1477.10" y="301.95" width="40.6" height="8.4" fill="#e9f0f3"/>
<rect x="1477.10" y="314.65" width="40.6" height="9.9" fill="#d0e1e7"/>
<rect x="1477.10" y="319.15" width="40.6" height="1" fill="rgba(0,0,0,0.06)"/>
<rect x="1521.60" y="301.95" width="40.6" height="8.4" fill="#71a9ba"/>
<rect x="1521.60" y="314.65" width="40.6" height="9.9" fill="#e9f0f3"/>
<rect x="1521.60" y="319.15" width="40.6" height="1" fill="rgba(0,0,0,0.06)"/>
<rect x="1566.10" y="301.95" width="40.6" height="8.4" fill="#e9f0f3"/>
<rect x="1566.10" y="314.65" width="40.6" height="9.9" fill="#d3e3e8"/>
<rect x="1566.10" y="319.15" width="40.6" height="1" fill="rgba(0,0,0,0.06)"/>
<rect x="1610.60" y="301.95" width="40.6" height="8.4" fill="#e9f0f3"/>
<rect x="1610.60" y="314.65" width="40.6" height="9.9" fill="#d7e5ea"/>
<rect x="1610.60" y="319.15" width="40.6" height="1" fill="rgba(0,0,0,0.06)"/>
<rect x="1655.10" y="301.95" width="40.6" height="8.4" fill="#e9f0f3"/>
<rect x="1655.10" y="314.65" width="40.6" height="9.9" fill="#d7e5ea"/>
<rect x="1655.10" y="319.15" width="40.6" height="1" fill="rgba(0,0,0,0.06)"/>
<rect x="1699.60" y="301.95" width="40.6" height="8.4" fill="#e9f0f3"/>
<rect x="1699.60" y="314.65" width="40.6" height="9.9" fill="#deeaee"/>
<rect x="1699.60" y="319.15" width="40.6" height="1" fill="rgba(0,0,0,0.06)"/>
<rect x="854.10" y="328.20" width="40.6" height="8.4" fill="#e9f0f3"/>
<rect x="854.10" y="340.90" width="40.6" height="9.9" fill="#e8f0f3"/>
<rect x="854.10" y="345.40" width="40.6" height="1" fill="rgba(0,0,0,0.06)"/>
<rect x="898.60" y="328.20" width="40.6" height="8.4" fill="#e9f0f3"/>
<rect x="898.60" y="340.90" width="40.6" height="9.9" fill="#e4edf1"/>
<rect x="898.60" y="345.40" width="40.6" height="1" fill="rgba(0,0,0,0.06)"/>
<rect x="943.10" y="328.20" width="40.6" height="8.4" fill="#e9f0f3"/>
<rect x="943.10" y="340.90" width="40.6" height="9.9" fill="#e9f0f3"/>
<rect x="943.10" y="345.40" width="40.6" height="1" fill="rgba(0,0,0,0.06)"/>
<rect x="987.60" y="328.20" width="40.6" height="8.4" fill="#e9f0f3"/>
<rect x="987.60" y="340.90" width="40.6" height="9.9" fill="#e5eef1"/>
<rect x="987.60" y="345.40" width="40.6" height="1" fill="rgba(0,0,0,0.06)"/>
<rect x="1032.10" y="328.20" width="40.6" height="8.4" fill="#e9f0f3"/>
<rect x="1032.10" y="340.90" width="40.6" height="9.9" fill="#e7eff2"/>
<rect x="1032.10" y="345.40" width="40.6" height="1" fill="rgba(0,0,0,0.06)"/>
<rect x="1076.60" y="328.20" width="40.6" height="8.4" fill="#e9f0f3"/>
<rect x="1076.60" y="340.90" width="40.6" height="9.9" fill="#e8f0f3"/>
<rect x="1076.60" y="345.40" width="40.6" height="1" fill="rgba(0,0,0,0.06)"/>
<rect x="1121.10" y="328.20" width="40.6" height="8.4" fill="#dae7ec"/>
<rect x="1121.10" y="340.90" width="40.6" height="9.9" fill="#d5e4ea"/>
<rect x="1121.10" y="345.40" width="40.6" height="1" fill="rgba(0,0,0,0.06)"/>
<rect x="1165.60" y="328.20" width="40.6" height="8.4" fill="#e9f0f3"/>
<rect x="1165.60" y="340.90" width="40.6" height="9.9" fill="#e8f0f3"/>
<rect x="1165.60" y="345.40" width="40.6" height="1" fill="rgba(0,0,0,0.06)"/>
<rect x="1210.10" y="328.20" width="40.6" height="8.4" fill="#e9f0f3"/>
<rect x="1210.10" y="340.90" width="40.6" height="9.9" fill="#e9f0f3"/>
<rect x="1210.10" y="345.40" width="40.6" height="1" fill="rgba(0,0,0,0.06)"/>
<rect x="1254.60" y="328.20" width="40.6" height="8.4" fill="#dae7ec"/>
<rect x="1254.60" y="340.90" width="40.6" height="9.9" fill="#d9e6eb"/>
<rect x="1254.60" y="345.40" width="40.6" height="1" fill="rgba(0,0,0,0.06)"/>
<rect x="1299.10" y="328.20" width="40.6" height="8.4" fill="#e9f0f3"/>
<rect x="1299.10" y="340.90" width="40.6" height="9.9" fill="#e8eff2"/>
<rect x="1299.10" y="345.40" width="40.6" height="1" fill="rgba(0,0,0,0.06)"/>
<rect x="1343.60" y="328.20" width="40.6" height="8.4" fill="#e9f0f3"/>
<rect x="1343.60" y="340.90" width="40.6" height="9.9" fill="#e4edf0"/>
<rect x="1343.60" y="345.40" width="40.6" height="1" fill="rgba(0,0,0,0.06)"/>
<rect x="1388.10" y="328.20" width="40.6" height="8.4" fill="#dde9ed"/>
<rect x="1388.10" y="340.90" width="40.6" height="9.9" fill="#dfeaee"/>
<rect x="1388.10" y="345.40" width="40.6" height="1" fill="rgba(0,0,0,0.06)"/>
<rect x="1432.60" y="328.20" width="40.6" height="8.4" fill="#e9f0f3"/>
<rect x="1432.60" y="340.90" width="40.6" height="9.9" fill="#e9f0f3"/>
<rect x="1432.60" y="345.40" width="40.6" height="1" fill="rgba(0,0,0,0.06)"/>
<rect x="1477.10" y="328.20" width="40.6" height="8.4" fill="#e9f0f3"/>
<rect x="1477.10" y="340.90" width="40.6" height="9.9" fill="#e9f0f3"/>
<rect x="1477.10" y="345.40" width="40.6" height="1" fill="rgba(0,0,0,0.06)"/>
<rect x="1521.60" y="328.20" width="40.6" height="8.4" fill="#e9f0f3"/>
<rect x="1521.60" y="340.90" width="40.6" height="9.9" fill="#e9f0f3"/>
<rect x="1521.60" y="345.40" width="40.6" height="1" fill="rgba(0,0,0,0.06)"/>
<rect x="1566.10" y="328.20" width="40.6" height="8.4" fill="#e9f0f3"/>
<rect x="1566.10" y="340.90" width="40.6" height="9.9" fill="#e8eff2"/>
<rect x="1566.10" y="345.40" width="40.6" height="1" fill="rgba(0,0,0,0.06)"/>
<rect x="1610.60" y="328.20" width="40.6" height="8.4" fill="#e0ebef"/>
<rect x="1610.60" y="340.90" width="40.6" height="9.9" fill="#e9f0f3"/>
<rect x="1610.60" y="345.40" width="40.6" height="1" fill="rgba(0,0,0,0.06)"/>
<rect x="1655.10" y="328.20" width="40.6" height="8.4" fill="#e9f0f3"/>
<rect x="1655.10" y="340.90" width="40.6" height="9.9" fill="#e8f0f3"/>
<rect x="1655.10" y="345.40" width="40.6" height="1" fill="rgba(0,0,0,0.06)"/>
<rect x="1699.60" y="328.20" width="40.6" height="8.4" fill="#e9f0f3"/>
<rect x="1699.60" y="340.90" width="40.6" height="9.9" fill="#e7eff2"/>
<rect x="1699.60" y="345.40" width="40.6" height="1" fill="rgba(0,0,0,0.06)"/>
<rect x="854.10" y="354.45" width="40.6" height="8.4" fill="#dae7ec"/>
<rect x="854.10" y="367.15" width="40.6" height="9.9" fill="#e9f0f3"/>
<rect x="854.10" y="371.65" width="40.6" height="1" fill="rgba(0,0,0,0.06)"/>
<rect x="898.60" y="354.45" width="40.6" height="8.4" fill="#e9f0f3"/>
<rect x="898.60" y="367.15" width="40.6" height="9.9" fill="#e5eef1"/>
<rect x="898.60" y="371.65" width="40.6" height="1" fill="rgba(0,0,0,0.06)"/>
<rect x="943.10" y="354.45" width="40.6" height="8.4" fill="#dae7ec"/>
<rect x="943.10" y="367.15" width="40.6" height="9.9" fill="#e7eff2"/>
<rect x="943.10" y="371.65" width="40.6" height="1" fill="rgba(0,0,0,0.06)"/>
<rect x="987.60" y="354.45" width="40.6" height="8.4" fill="#e9f0f3"/>
<rect x="987.60" y="367.15" width="40.6" height="9.9" fill="#e2ecf0"/>
<rect x="987.60" y="371.65" width="40.6" height="1" fill="rgba(0,0,0,0.06)"/>
<rect x="1032.10" y="354.45" width="40.6" height="8.4" fill="#dde9ed"/>
<rect x="1032.10" y="367.15" width="40.6" height="9.9" fill="#e8f0f3"/>
<rect x="1032.10" y="371.65" width="40.6" height="1" fill="rgba(0,0,0,0.06)"/>
<rect x="1076.60" y="354.45" width="40.6" height="8.4" fill="#dae7ec"/>
<rect x="1076.60" y="367.15" width="40.6" height="9.9" fill="#e8f0f3"/>
<rect x="1076.60" y="371.65" width="40.6" height="1" fill="rgba(0,0,0,0.06)"/>
<rect x="1121.10" y="354.45" width="40.6" height="8.4" fill="#e9f0f3"/>
<rect x="1121.10" y="367.15" width="40.6" height="9.9" fill="#d9e6eb"/>
<rect x="1121.10" y="371.65" width="40.6" height="1" fill="rgba(0,0,0,0.06)"/>
<rect x="1165.60" y="354.45" width="40.6" height="8.4" fill="#dae7ec"/>
<rect x="1165.60" y="367.15" width="40.6" height="9.9" fill="#e8f0f3"/>
<rect x="1165.60" y="371.65" width="40.6" height="1" fill="rgba(0,0,0,0.06)"/>
<rect x="1210.10" y="354.45" width="40.6" height="8.4" fill="#dde9ed"/>
<rect x="1210.10" y="367.15" width="40.6" height="9.9" fill="#e9f0f3"/>
<rect x="1210.10" y="371.65" width="40.6" height="1" fill="rgba(0,0,0,0.06)"/>
<rect x="1254.60" y="354.45" width="40.6" height="8.4" fill="#e9f0f3"/>
<rect x="1254.60" y="367.15" width="40.6" height="9.9" fill="#d8e6eb"/>
<rect x="1254.60" y="371.65" width="40.6" height="1" fill="rgba(0,0,0,0.06)"/>
<rect x="1299.10" y="354.45" width="40.6" height="8.4" fill="#dde9ed"/>
<rect x="1299.10" y="367.15" width="40.6" height="9.9" fill="#e8f0f3"/>
<rect x="1299.10" y="371.65" width="40.6" height="1" fill="rgba(0,0,0,0.06)"/>
<rect x="1343.60" y="354.45" width="40.6" height="8.4" fill="#e9f0f3"/>
<rect x="1343.60" y="367.15" width="40.6" height="9.9" fill="#e5eef1"/>
<rect x="1343.60" y="371.65" width="40.6" height="1" fill="rgba(0,0,0,0.06)"/>
<rect x="1388.10" y="354.45" width="40.6" height="8.4" fill="#e9f0f3"/>
<rect x="1388.10" y="367.15" width="40.6" height="9.9" fill="#dae7ec"/>
<rect x="1388.10" y="371.65" width="40.6" height="1" fill="rgba(0,0,0,0.06)"/>
<rect x="1432.60" y="354.45" width="40.6" height="8.4" fill="#e9f0f3"/>
<rect x="1432.60" y="367.15" width="40.6" height="9.9" fill="#e9f0f3"/>
<rect x="1432.60" y="371.65" width="40.6" height="1" fill="rgba(0,0,0,0.06)"/>
<rect x="1477.10" y="354.45" width="40.6" height="8.4" fill="#dae7ec"/>
<rect x="1477.10" y="367.15" width="40.6" height="9.9" fill="#e9f0f3"/>
<rect x="1477.10" y="371.65" width="40.6" height="1" fill="rgba(0,0,0,0.06)"/>
<rect x="1521.60" y="354.45" width="40.6" height="8.4" fill="#e9f0f3"/>
<rect x="1521.60" y="367.15" width="40.6" height="9.9" fill="#e9f0f3"/>
<rect x="1521.60" y="371.65" width="40.6" height="1" fill="rgba(0,0,0,0.06)"/>
<rect x="1566.10" y="354.45" width="40.6" height="8.4" fill="#dde9ed"/>
<rect x="1566.10" y="367.15" width="40.6" height="9.9" fill="#e9f0f3"/>
<rect x="1566.10" y="371.65" width="40.6" height="1" fill="rgba(0,0,0,0.06)"/>
<rect x="1610.60" y="354.45" width="40.6" height="8.4" fill="#dde9ed"/>
<rect x="1610.60" y="367.15" width="40.6" height="9.9" fill="#e8eff2"/>
<rect x="1610.60" y="371.65" width="40.6" height="1" fill="rgba(0,0,0,0.06)"/>
<rect x="1655.10" y="354.45" width="40.6" height="8.4" fill="#e0ebef"/>
<rect x="1655.10" y="367.15" width="40.6" height="9.9" fill="#e8eff2"/>
<rect x="1655.10" y="371.65" width="40.6" height="1" fill="rgba(0,0,0,0.06)"/>
<rect x="1699.60" y="354.45" width="40.6" height="8.4" fill="#e0ebef"/>
<rect x="1699.60" y="367.15" width="40.6" height="9.9" fill="#e8f0f3"/>
<rect x="1699.60" y="371.65" width="40.6" height="1" fill="rgba(0,0,0,0.06)"/>
<rect x="854.10" y="380.70" width="40.6" height="8.4" fill="#e9f0f3"/>
<rect x="854.10" y="393.40" width="40.6" height="9.9" fill="#d4e4e9"/>
<rect x="854.10" y="397.90" width="40.6" height="1" fill="rgba(0,0,0,0.06)"/>
<rect x="898.60" y="380.70" width="40.6" height="8.4" fill="#e9f0f3"/>
<rect x="898.60" y="393.40" width="40.6" height="9.9" fill="#e8f0f3"/>
<rect x="898.60" y="397.90" width="40.6" height="1" fill="rgba(0,0,0,0.06)"/>
<rect x="943.10" y="380.70" width="40.6" height="8.4" fill="#e9f0f3"/>
<rect x="943.10" y="393.40" width="40.6" height="9.9" fill="#d8e6eb"/>
<rect x="943.10" y="397.90" width="40.6" height="1" fill="rgba(0,0,0,0.06)"/>
<rect x="987.60" y="380.70" width="40.6" height="8.4" fill="#e9f0f3"/>
<rect x="987.60" y="393.40" width="40.6" height="9.9" fill="#e9f0f3"/>
<rect x="987.60" y="397.90" width="40.6" height="1" fill="rgba(0,0,0,0.06)"/>
<rect x="1032.10" y="380.70" width="40.6" height="8.4" fill="#e9f0f3"/>
<rect x="1032.10" y="393.40" width="40.6" height="9.9" fill="#d5e4ea"/>
<rect x="1032.10" y="397.90" width="40.6" height="1" fill="rgba(0,0,0,0.06)"/>
<rect x="1076.60" y="380.70" width="40.6" height="8.4" fill="#dae7ec"/>
<rect x="1076.60" y="393.40" width="40.6" height="9.9" fill="#cddfe6"/>
<rect x="1076.60" y="397.90" width="40.6" height="1" fill="rgba(0,0,0,0.06)"/>
<rect x="1121.10" y="380.70" width="40.6" height="8.4" fill="#e9f0f3"/>
<rect x="1121.10" y="393.40" width="40.6" height="9.9" fill="#e9f0f3"/>
<rect x="1121.10" y="397.90" width="40.6" height="1" fill="rgba(0,0,0,0.06)"/>
<rect x="1165.60" y="380.70" width="40.6" height="8.4" fill="#dae7ec"/>
<rect x="1165.60" y="393.40" width="40.6" height="9.9" fill="#d8e6eb"/>
<rect x="1165.60" y="397.90" width="40.6" height="1" fill="rgba(0,0,0,0.06)"/>
<rect x="1210.10" y="380.70" width="40.6" height="8.4" fill="#e9f0f3"/>
<rect x="1210.10" y="393.40" width="40.6" height="9.9" fill="#d6e5ea"/>
<rect x="1210.10" y="397.90" width="40.6" height="1" fill="rgba(0,0,0,0.06)"/>
<rect x="1254.60" y="380.70" width="40.6" height="8.4" fill="#e9f0f3"/>
<rect x="1254.60" y="393.40" width="40.6" height="9.9" fill="#e9f0f3"/>
<rect x="1254.60" y="397.90" width="40.6" height="1" fill="rgba(0,0,0,0.06)"/>
<rect x="1299.10" y="380.70" width="40.6" height="8.4" fill="#e9f0f3"/>
<rect x="1299.10" y="393.40" width="40.6" height="9.9" fill="#d7e5ea"/>
<rect x="1299.10" y="397.90" width="40.6" height="1" fill="rgba(0,0,0,0.06)"/>
<rect x="1343.60" y="380.70" width="40.6" height="8.4" fill="#e9f0f3"/>
<rect x="1343.60" y="393.40" width="40.6" height="9.9" fill="#e9f0f3"/>
<rect x="1343.60" y="397.90" width="40.6" height="1" fill="rgba(0,0,0,0.06)"/>
<rect x="1388.10" y="380.70" width="40.6" height="8.4" fill="#e9f0f3"/>
<rect x="1388.10" y="393.40" width="40.6" height="9.9" fill="#e9f0f3"/>
<rect x="1388.10" y="397.90" width="40.6" height="1" fill="rgba(0,0,0,0.06)"/>
<rect x="1432.60" y="380.70" width="40.6" height="8.4" fill="#e9f0f3"/>
<rect x="1432.60" y="393.40" width="40.6" height="9.9" fill="#e9f0f3"/>
<rect x="1432.60" y="397.90" width="40.6" height="1" fill="rgba(0,0,0,0.06)"/>
<rect x="1477.10" y="380.70" width="40.6" height="8.4" fill="#dae7ec"/>
<rect x="1477.10" y="393.40" width="40.6" height="9.9" fill="#d4e4e9"/>
<rect x="1477.10" y="397.90" width="40.6" height="1" fill="rgba(0,0,0,0.06)"/>
<rect x="1521.60" y="380.70" width="40.6" height="8.4" fill="#e9f0f3"/>
<rect x="1521.60" y="393.40" width="40.6" height="9.9" fill="#e9f0f3"/>
<rect x="1521.60" y="397.90" width="40.6" height="1" fill="rgba(0,0,0,0.06)"/>
<rect x="1566.10" y="380.70" width="40.6" height="8.4" fill="#e0ebef"/>
<rect x="1566.10" y="393.40" width="40.6" height="9.9" fill="#d7e5ea"/>
<rect x="1566.10" y="397.90" width="40.6" height="1" fill="rgba(0,0,0,0.06)"/>
<rect x="1610.60" y="380.70" width="40.6" height="8.4" fill="#e9f0f3"/>
<rect x="1610.60" y="393.40" width="40.6" height="9.9" fill="#d3e3e8"/>
<rect x="1610.60" y="397.90" width="40.6" height="1" fill="rgba(0,0,0,0.06)"/>
<rect x="1655.10" y="380.70" width="40.6" height="8.4" fill="#e9f0f3"/>
<rect x="1655.10" y="393.40" width="40.6" height="9.9" fill="#dae7ec"/>
<rect x="1655.10" y="397.90" width="40.6" height="1" fill="rgba(0,0,0,0.06)"/>
<rect x="1699.60" y="380.70" width="40.6" height="8.4" fill="#e9f0f3"/>
<rect x="1699.60" y="393.40" width="40.6" height="9.9" fill="#d8e6eb"/>
<rect x="1699.60" y="397.90" width="40.6" height="1" fill="rgba(0,0,0,0.06)"/>
<rect x="854.10" y="406.95" width="40.6" height="8.4" fill="#e9f0f3"/>
<rect x="854.10" y="419.65" width="40.6" height="9.9" fill="#e8f0f3"/>
<rect x="854.10" y="424.15" width="40.6" height="1" fill="rgba(0,0,0,0.06)"/>
<rect x="898.60" y="406.95" width="40.6" height="8.4" fill="#e9f0f3"/>
<rect x="898.60" y="419.65" width="40.6" height="9.9" fill="#e7eff2"/>
<rect x="898.60" y="424.15" width="40.6" height="1" fill="rgba(0,0,0,0.06)"/>
<rect x="943.10" y="406.95" width="40.6" height="8.4" fill="#e9f0f3"/>
<rect x="943.10" y="419.65" width="40.6" height="9.9" fill="#e8f0f3"/>
<rect x="943.10" y="424.15" width="40.6" height="1" fill="rgba(0,0,0,0.06)"/>
<rect x="987.60" y="406.95" width="40.6" height="8.4" fill="#e9f0f3"/>
<rect x="987.60" y="419.65" width="40.6" height="9.9" fill="#e5eef1"/>
<rect x="987.60" y="424.15" width="40.6" height="1" fill="rgba(0,0,0,0.06)"/>
<rect x="1032.10" y="406.95" width="40.6" height="8.4" fill="#e9f0f3"/>
<rect x="1032.10" y="419.65" width="40.6" height="9.9" fill="#e8eff2"/>
<rect x="1032.10" y="424.15" width="40.6" height="1" fill="rgba(0,0,0,0.06)"/>
<rect x="1076.60" y="406.95" width="40.6" height="8.4" fill="#d7e5ea"/>
<rect x="1076.60" y="419.65" width="40.6" height="9.9" fill="#e9f0f3"/>
<rect x="1076.60" y="424.15" width="40.6" height="1" fill="rgba(0,0,0,0.06)"/>
<rect x="1121.10" y="406.95" width="40.6" height="8.4" fill="#e9f0f3"/>
<rect x="1121.10" y="419.65" width="40.6" height="9.9" fill="#dbe8ec"/>
<rect x="1121.10" y="424.15" width="40.6" height="1" fill="rgba(0,0,0,0.06)"/>
<rect x="1165.60" y="406.95" width="40.6" height="8.4" fill="#dae7ec"/>
<rect x="1165.60" y="419.65" width="40.6" height="9.9" fill="#e9f0f3"/>
<rect x="1165.60" y="424.15" width="40.6" height="1" fill="rgba(0,0,0,0.06)"/>
<rect x="1210.10" y="406.95" width="40.6" height="8.4" fill="#e9f0f3"/>
<rect x="1210.10" y="419.65" width="40.6" height="9.9" fill="#e9f0f3"/>
<rect x="1210.10" y="424.15" width="40.6" height="1" fill="rgba(0,0,0,0.06)"/>
<rect x="1254.60" y="406.95" width="40.6" height="8.4" fill="#e9f0f3"/>
<rect x="1254.60" y="419.65" width="40.6" height="9.9" fill="#dae7ec"/>
<rect x="1254.60" y="424.15" width="40.6" height="1" fill="rgba(0,0,0,0.06)"/>
<rect x="1299.10" y="406.95" width="40.6" height="8.4" fill="#e9f0f3"/>
<rect x="1299.10" y="419.65" width="40.6" height="9.9" fill="#e8eff2"/>
<rect x="1299.10" y="424.15" width="40.6" height="1" fill="rgba(0,0,0,0.06)"/>
<rect x="1343.60" y="406.95" width="40.6" height="8.4" fill="#e9f0f3"/>
<rect x="1343.60" y="419.65" width="40.6" height="9.9" fill="#e5eef1"/>
<rect x="1343.60" y="424.15" width="40.6" height="1" fill="rgba(0,0,0,0.06)"/>
<rect x="1388.10" y="406.95" width="40.6" height="8.4" fill="#e9f0f3"/>
<rect x="1388.10" y="419.65" width="40.6" height="9.9" fill="#d7e5ea"/>
<rect x="1388.10" y="424.15" width="40.6" height="1" fill="rgba(0,0,0,0.06)"/>
<rect x="1432.60" y="406.95" width="40.6" height="8.4" fill="#e9f0f3"/>
<rect x="1432.60" y="419.65" width="40.6" height="9.9" fill="#e9f0f3"/>
<rect x="1432.60" y="424.15" width="40.6" height="1" fill="rgba(0,0,0,0.06)"/>
<rect x="1477.10" y="406.95" width="40.6" height="8.4" fill="#dae7ec"/>
<rect x="1477.10" y="419.65" width="40.6" height="9.9" fill="#e9f0f3"/>
<rect x="1477.10" y="424.15" width="40.6" height="1" fill="rgba(0,0,0,0.06)"/>
<rect x="1521.60" y="406.95" width="40.6" height="8.4" fill="#e9f0f3"/>
<rect x="1521.60" y="419.65" width="40.6" height="9.9" fill="#e9f0f3"/>
<rect x="1521.60" y="424.15" width="40.6" height="1" fill="rgba(0,0,0,0.06)"/>
<rect x="1566.10" y="406.95" width="40.6" height="8.4" fill="#e0ebef"/>
<rect x="1566.10" y="419.65" width="40.6" height="9.9" fill="#e8f0f3"/>
<rect x="1566.10" y="424.15" width="40.6" height="1" fill="rgba(0,0,0,0.06)"/>
<rect x="1610.60" y="406.95" width="40.6" height="8.4" fill="#e9f0f3"/>
<rect x="1610.60" y="419.65" width="40.6" height="9.9" fill="#e9f0f3"/>
<rect x="1610.60" y="424.15" width="40.6" height="1" fill="rgba(0,0,0,0.06)"/>
<rect x="1655.10" y="406.95" width="40.6" height="8.4" fill="#e9f0f3"/>
<rect x="1655.10" y="419.65" width="40.6" height="9.9" fill="#e8eff2"/>
<rect x="1655.10" y="424.15" width="40.6" height="1" fill="rgba(0,0,0,0.06)"/>
<rect x="1699.60" y="406.95" width="40.6" height="8.4" fill="#e9f0f3"/>
<rect x="1699.60" y="419.65" width="40.6" height="9.9" fill="#e7eff2"/>
<rect x="1699.60" y="424.15" width="40.6" height="1" fill="rgba(0,0,0,0.06)"/>
<rect x="854.10" y="433.20" width="40.6" height="8.4" fill="#e9f0f3"/>
<rect x="854.10" y="445.90" width="40.6" height="9.9" fill="#e8eff2"/>
<rect x="854.10" y="450.40" width="40.6" height="1" fill="rgba(0,0,0,0.06)"/>
<rect x="898.60" y="433.20" width="40.6" height="8.4" fill="#e9f0f3"/>
<rect x="898.60" y="445.90" width="40.6" height="9.9" fill="#e5eef1"/>
<rect x="898.60" y="450.40" width="40.6" height="1" fill="rgba(0,0,0,0.06)"/>
<rect x="943.10" y="433.20" width="40.6" height="8.4" fill="#e9f0f3"/>
<rect x="943.10" y="445.90" width="40.6" height="9.9" fill="#e9f0f3"/>
<rect x="943.10" y="450.40" width="40.6" height="1" fill="rgba(0,0,0,0.06)"/>
<rect x="987.60" y="433.20" width="40.6" height="8.4" fill="#e9f0f3"/>
<rect x="987.60" y="445.90" width="40.6" height="9.9" fill="#e7eff2"/>
<rect x="987.60" y="450.40" width="40.6" height="1" fill="rgba(0,0,0,0.06)"/>
<rect x="1032.10" y="433.20" width="40.6" height="8.4" fill="#e9f0f3"/>
<rect x="1032.10" y="445.90" width="40.6" height="9.9" fill="#e8f0f3"/>
<rect x="1032.10" y="450.40" width="40.6" height="1" fill="rgba(0,0,0,0.06)"/>
<rect x="1076.60" y="433.20" width="40.6" height="8.4" fill="#e9f0f3"/>
<rect x="1076.60" y="445.90" width="40.6" height="9.9" fill="#e9f0f3"/>
<rect x="1076.60" y="450.40" width="40.6" height="1" fill="rgba(0,0,0,0.06)"/>
<rect x="1121.10" y="433.20" width="40.6" height="8.4" fill="#dde9ed"/>
<rect x="1121.10" y="445.90" width="40.6" height="9.9" fill="#dfeaee"/>
<rect x="1121.10" y="450.40" width="40.6" height="1" fill="rgba(0,0,0,0.06)"/>
<rect x="1165.60" y="433.20" width="40.6" height="8.4" fill="#e9f0f3"/>
<rect x="1165.60" y="445.90" width="40.6" height="9.9" fill="#e9f0f3"/>
<rect x="1165.60" y="450.40" width="40.6" height="1" fill="rgba(0,0,0,0.06)"/>
<rect x="1210.10" y="433.20" width="40.6" height="8.4" fill="#e9f0f3"/>
<rect x="1210.10" y="445.90" width="40.6" height="9.9" fill="#e9f0f3"/>
<rect x="1210.10" y="450.40" width="40.6" height="1" fill="rgba(0,0,0,0.06)"/>
<rect x="1254.60" y="433.20" width="40.6" height="8.4" fill="#dde9ed"/>
<rect x="1254.60" y="445.90" width="40.6" height="9.9" fill="#dde9ed"/>
<rect x="1254.60" y="450.40" width="40.6" height="1" fill="rgba(0,0,0,0.06)"/>
<rect x="1299.10" y="433.20" width="40.6" height="8.4" fill="#e9f0f3"/>
<rect x="1299.10" y="445.90" width="40.6" height="9.9" fill="#e8f0f3"/>
<rect x="1299.10" y="450.40" width="40.6" height="1" fill="rgba(0,0,0,0.06)"/>
<rect x="1343.60" y="433.20" width="40.6" height="8.4" fill="#e9f0f3"/>
<rect x="1343.60" y="445.90" width="40.6" height="9.9" fill="#e7eff2"/>
<rect x="1343.60" y="450.40" width="40.6" height="1" fill="rgba(0,0,0,0.06)"/>
<rect x="1388.10" y="433.20" width="40.6" height="8.4" fill="#dde9ed"/>
<rect x="1388.10" y="445.90" width="40.6" height="9.9" fill="#dce8ed"/>
<rect x="1388.10" y="450.40" width="40.6" height="1" fill="rgba(0,0,0,0.06)"/>
<rect x="1432.60" y="433.20" width="40.6" height="8.4" fill="#e9f0f3"/>
<rect x="1432.60" y="445.90" width="40.6" height="9.9" fill="#e9f0f3"/>
<rect x="1432.60" y="450.40" width="40.6" height="1" fill="rgba(0,0,0,0.06)"/>
<rect x="1477.10" y="433.20" width="40.6" height="8.4" fill="#e9f0f3"/>
<rect x="1477.10" y="445.90" width="40.6" height="9.9" fill="#e8f0f3"/>
<rect x="1477.10" y="450.40" width="40.6" height="1" fill="rgba(0,0,0,0.06)"/>
<rect x="1521.60" y="433.20" width="40.6" height="8.4" fill="#e9f0f3"/>
<rect x="1521.60" y="445.90" width="40.6" height="9.9" fill="#e9f0f3"/>
<rect x="1521.60" y="450.40" width="40.6" height="1" fill="rgba(0,0,0,0.06)"/>
<rect x="1566.10" y="433.20" width="40.6" height="8.4" fill="#e9f0f3"/>
<rect x="1566.10" y="445.90" width="40.6" height="9.9" fill="#e8f0f3"/>
<rect x="1566.10" y="450.40" width="40.6" height="1" fill="rgba(0,0,0,0.06)"/>
<rect x="1610.60" y="433.20" width="40.6" height="8.4" fill="#e9f0f3"/>
<rect x="1610.60" y="445.90" width="40.6" height="9.9" fill="#e8eff2"/>
<rect x="1610.60" y="450.40" width="40.6" height="1" fill="rgba(0,0,0,0.06)"/>
<rect x="1655.10" y="433.20" width="40.6" height="8.4" fill="#e9f0f3"/>
<rect x="1655.10" y="445.90" width="40.6" height="9.9" fill="#e9f0f3"/>
<rect x="1655.10" y="450.40" width="40.6" height="1" fill="rgba(0,0,0,0.06)"/>
<rect x="1699.60" y="433.20" width="40.6" height="8.4" fill="#e9f0f3"/>
<rect x="1699.60" y="445.90" width="40.6" height="9.9" fill="#e9f0f3"/>
<rect x="1699.60" y="450.40" width="40.6" height="1" fill="rgba(0,0,0,0.06)"/>
<rect x="854.10" y="459.45" width="40.6" height="8.4" fill="#e9f0f3"/>
<rect x="854.10" y="472.15" width="40.6" height="9.9" fill="#e7eff2"/>
<rect x="854.10" y="476.65" width="40.6" height="1" fill="rgba(0,0,0,0.06)"/>
<rect x="898.60" y="459.45" width="40.6" height="8.4" fill="#e9f0f3"/>
<rect x="898.60" y="472.15" width="40.6" height="9.9" fill="#e5eef1"/>
<rect x="898.60" y="476.65" width="40.6" height="1" fill="rgba(0,0,0,0.06)"/>
<rect x="943.10" y="459.45" width="40.6" height="8.4" fill="#e9f0f3"/>
<rect x="943.10" y="472.15" width="40.6" height="9.9" fill="#e7eff2"/>
<rect x="943.10" y="476.65" width="40.6" height="1" fill="rgba(0,0,0,0.06)"/>
<rect x="987.60" y="459.45" width="40.6" height="8.4" fill="#e9f0f3"/>
<rect x="987.60" y="472.15" width="40.6" height="9.9" fill="#e5eef1"/>
<rect x="987.60" y="476.65" width="40.6" height="1" fill="rgba(0,0,0,0.06)"/>
<rect x="1032.10" y="459.45" width="40.6" height="8.4" fill="#e9f0f3"/>
<rect x="1032.10" y="472.15" width="40.6" height="9.9" fill="#e9f0f3"/>
<rect x="1032.10" y="476.65" width="40.6" height="1" fill="rgba(0,0,0,0.06)"/>
<rect x="1076.60" y="459.45" width="40.6" height="8.4" fill="#e9f0f3"/>
<rect x="1076.60" y="472.15" width="40.6" height="9.9" fill="#e9f0f3"/>
<rect x="1076.60" y="476.65" width="40.6" height="1" fill="rgba(0,0,0,0.06)"/>
<rect x="1121.10" y="459.45" width="40.6" height="8.4" fill="#dae7ec"/>
<rect x="1121.10" y="472.15" width="40.6" height="9.9" fill="#d5e4ea"/>
<rect x="1121.10" y="476.65" width="40.6" height="1" fill="rgba(0,0,0,0.06)"/>
<rect x="1165.60" y="459.45" width="40.6" height="8.4" fill="#e9f0f3"/>
<rect x="1165.60" y="472.15" width="40.6" height="9.9" fill="#e9f0f3"/>
<rect x="1165.60" y="476.65" width="40.6" height="1" fill="rgba(0,0,0,0.06)"/>
<rect x="1210.10" y="459.45" width="40.6" height="8.4" fill="#e9f0f3"/>
<rect x="1210.10" y="472.15" width="40.6" height="9.9" fill="#e8eff2"/>
<rect x="1210.10" y="476.65" width="40.6" height="1" fill="rgba(0,0,0,0.06)"/>
<rect x="1254.60" y="459.45" width="40.6" height="8.4" fill="#dae7ec"/>
<rect x="1254.60" y="472.15" width="40.6" height="9.9" fill="#dde9ed"/>
<rect x="1254.60" y="476.65" width="40.6" height="1" fill="rgba(0,0,0,0.06)"/>
<rect x="1299.10" y="459.45" width="40.6" height="8.4" fill="#e9f0f3"/>
<rect x="1299.10" y="472.15" width="40.6" height="9.9" fill="#e9f0f3"/>
<rect x="1299.10" y="476.65" width="40.6" height="1" fill="rgba(0,0,0,0.06)"/>
<rect x="1343.60" y="459.45" width="40.6" height="8.4" fill="#e9f0f3"/>
<rect x="1343.60" y="472.15" width="40.6" height="9.9" fill="#e5eef1"/>
<rect x="1343.60" y="476.65" width="40.6" height="1" fill="rgba(0,0,0,0.06)"/>
<rect x="1388.10" y="459.45" width="40.6" height="8.4" fill="#dae7ec"/>
<rect x="1388.10" y="472.15" width="40.6" height="9.9" fill="#d9e6eb"/>
<rect x="1388.10" y="476.65" width="40.6" height="1" fill="rgba(0,0,0,0.06)"/>
<rect x="1432.60" y="459.45" width="40.6" height="8.4" fill="#e9f0f3"/>
<rect x="1432.60" y="472.15" width="40.6" height="9.9" fill="#e9f0f3"/>
<rect x="1432.60" y="476.65" width="40.6" height="1" fill="rgba(0,0,0,0.06)"/>
<rect x="1477.10" y="459.45" width="40.6" height="8.4" fill="#e9f0f3"/>
<rect x="1477.10" y="472.15" width="40.6" height="9.9" fill="#e9f0f3"/>
<rect x="1477.10" y="476.65" width="40.6" height="1" fill="rgba(0,0,0,0.06)"/>
<rect x="1521.60" y="459.45" width="40.6" height="8.4" fill="#e9f0f3"/>
<rect x="1521.60" y="472.15" width="40.6" height="9.9" fill="#e9f0f3"/>
<rect x="1521.60" y="476.65" width="40.6" height="1" fill="rgba(0,0,0,0.06)"/>
<rect x="1566.10" y="459.45" width="40.6" height="8.4" fill="#e9f0f3"/>
<rect x="1566.10" y="472.15" width="40.6" height="9.9" fill="#e9f0f3"/>
<rect x="1566.10" y="476.65" width="40.6" height="1" fill="rgba(0,0,0,0.06)"/>
<rect x="1610.60" y="459.45" width="40.6" height="8.4" fill="#e9f0f3"/>
<rect x="1610.60" y="472.15" width="40.6" height="9.9" fill="#e8eff2"/>
<rect x="1610.60" y="476.65" width="40.6" height="1" fill="rgba(0,0,0,0.06)"/>
<rect x="1655.10" y="459.45" width="40.6" height="8.4" fill="#e9f0f3"/>
<rect x="1655.10" y="472.15" width="40.6" height="9.9" fill="#e8f0f3"/>
<rect x="1655.10" y="476.65" width="40.6" height="1" fill="rgba(0,0,0,0.06)"/>
<rect x="1699.60" y="459.45" width="40.6" height="8.4" fill="#e9f0f3"/>
<rect x="1699.60" y="472.15" width="40.6" height="9.9" fill="#e8eff2"/>
<rect x="1699.60" y="476.65" width="40.6" height="1" fill="rgba(0,0,0,0.06)"/>
<g font-family="&quot;Liberation Sans&quot;, sans-serif" font-size="12.5" font-weight="700" fill="#000" text-anchor="middle" stroke="#fff" stroke-width="2.6" paint-order="stroke" stroke-linejoin="round">
<text x="874.50" y="245.20">3</text>
<text x="919.00" y="245.20">9</text>
<text x="963.50" y="245.20">0</text>
<text x="1008.00" y="245.20">3</text>
<text x="1052.50" y="245.20">1</text>
<text x="1097.00" y="245.20">1</text>
<text x="1141.50" y="245.20">22</text>
<text x="1186.00" y="245.20">0</text>
<text x="1230.50" y="245.20">0</text>
<text x="1275.00" y="245.20">23</text>
<text x="1319.50" y="245.20">1</text>
<text x="1364.00" y="245.20">6</text>
<text x="1408.50" y="245.20">27</text>
<text x="1453.00" y="245.20">0</text>
<text x="1497.50" y="245.20">0</text>
<text x="1542.00" y="245.20">0</text>
<text x="1586.50" y="245.20">2</text>
<text x="1631.00" y="245.20">1</text>
<text x="1675.50" y="245.20">2</text>
<text x="1720.00" y="245.20">3</text>
<text x="874.50" y="271.45">1</text>
<text x="919.00" y="271.45">4</text>
<text x="963.50" y="271.45">2</text>
<text x="1008.00" y="271.45">8</text>
<text x="1052.50" y="271.45">3</text>
<text x="1097.00" y="271.45">0</text>
<text x="1141.50" y="271.45">22</text>
<text x="1186.00" y="271.45">2</text>
<text x="1230.50" y="271.45">2</text>
<text x="1275.00" y="271.45">28</text>
<text x="1319.50" y="271.45">0</text>
<text x="1364.00" y="271.45">8</text>
<text x="1408.50" y="271.45">27</text>
<text x="1453.00" y="271.45">0</text>
<text x="1497.50" y="271.45">0</text>
<text x="1542.00" y="271.45">0</text>
<text x="1586.50" y="271.45">0</text>
<text x="1631.00" y="271.45">1</text>
<text x="1675.50" y="271.45">0</text>
<text x="1720.00" y="271.45">0</text>
<text x="874.50" y="297.70">10</text>
<text x="919.00" y="297.70">0</text>
<text x="963.50" y="297.70">9</text>
<text x="1008.00" y="297.70">0</text>
<text x="1052.50" y="297.70">10</text>
<text x="1097.00" y="297.70">34</text>
<text x="1141.50" y="297.70">8</text>
<text x="1186.00" y="297.70">27</text>
<text x="1230.50" y="297.70">9</text>
<text x="1275.00" y="297.70">6</text>
<text x="1319.50" y="297.70">12</text>
<text x="1364.00" y="297.70">0</text>
<text x="1408.50" y="297.70">5</text>
<text x="1453.00" y="297.70">0</text>
<text x="1497.50" y="297.70">38</text>
<text x="1542.00" y="297.70">0</text>
<text x="1586.50" y="297.70">11</text>
<text x="1631.00" y="297.70">7</text>
<text x="1675.50" y="297.70">6</text>
<text x="1720.00" y="297.70">15</text>
<text x="874.50" y="323.95">31</text>
<text x="919.00" y="323.95">1</text>
<text x="963.50" y="323.95">26</text>
<text x="1008.00" y="323.95">0</text>
<text x="1052.50" y="323.95">33</text>
<text x="1097.00" y="323.95">42</text>
<text x="1141.50" y="323.95">0</text>
<text x="1186.00" y="323.95">42</text>
<text x="1230.50" y="323.95">36</text>
<text x="1275.00" y="323.95">0</text>
<text x="1319.50" y="323.95">29</text>
<text x="1364.00" y="323.95">0</text>
<text x="1408.50" y="323.95">1</text>
<text x="1453.00" y="323.95">0</text>
<text x="1497.50" y="323.95">41</text>
<text x="1542.00" y="323.95">0</text>
<text x="1586.50" y="323.95">37</text>
<text x="1631.00" y="323.95">30</text>
<text x="1675.50" y="323.95">30</text>
<text x="1720.00" y="323.95">18</text>
<text x="874.50" y="350.20">1</text>
<text x="919.00" y="350.20">8</text>
<text x="963.50" y="350.20">0</text>
<text x="1008.00" y="350.20">7</text>
<text x="1052.50" y="350.20">3</text>
<text x="1097.00" y="350.20">1</text>
<text x="1141.50" y="350.20">33</text>
<text x="1186.00" y="350.20">1</text>
<text x="1230.50" y="350.20">0</text>
<text x="1275.00" y="350.20">27</text>
<text x="1319.50" y="350.20">2</text>
<text x="1364.00" y="350.20">9</text>
<text x="1408.50" y="350.20">17</text>
<text x="1453.00" y="350.20">0</text>
<text x="1497.50" y="350.20">0</text>
<text x="1542.00" y="350.20">0</text>
<text x="1586.50" y="350.20">2</text>
<text x="1631.00" y="350.20">0</text>
<text x="1675.50" y="350.20">1</text>
<text x="1720.00" y="350.20">3</text>
<text x="874.50" y="376.45">0</text>
<text x="919.00" y="376.45">6</text>
<text x="963.50" y="376.45">4</text>
<text x="1008.00" y="376.45">11</text>
<text x="1052.50" y="376.45">1</text>
<text x="1097.00" y="376.45">1</text>
<text x="1141.50" y="376.45">27</text>
<text x="1186.00" y="376.45">1</text>
<text x="1230.50" y="376.45">0</text>
<text x="1275.00" y="376.45">28</text>
<text x="1319.50" y="376.45">1</text>
<text x="1364.00" y="376.45">6</text>
<text x="1408.50" y="376.45">25</text>
<text x="1453.00" y="376.45">0</text>
<text x="1497.50" y="376.45">0</text>
<text x="1542.00" y="376.45">0</text>
<text x="1586.50" y="376.45">0</text>
<text x="1631.00" y="376.45">2</text>
<text x="1675.50" y="376.45">2</text>
<text x="1720.00" y="376.45">1</text>
<text x="874.50" y="402.70">35</text>
<text x="919.00" y="402.70">1</text>
<text x="963.50" y="402.70">29</text>
<text x="1008.00" y="402.70">0</text>
<text x="1052.50" y="402.70">33</text>
<text x="1097.00" y="402.70">47</text>
<text x="1141.50" y="402.70">0</text>
<text x="1186.00" y="402.70">29</text>
<text x="1230.50" y="402.70">31</text>
<text x="1275.00" y="402.70">0</text>
<text x="1319.50" y="402.70">30</text>
<text x="1364.00" y="402.70">0</text>
<text x="1408.50" y="402.70">0</text>
<text x="1453.00" y="402.70">0</text>
<text x="1497.50" y="402.70">35</text>
<text x="1542.00" y="402.70">0</text>
<text x="1586.50" y="402.70">30</text>
<text x="1631.00" y="402.70">37</text>
<text x="1675.50" y="402.70">25</text>
<text x="1720.00" y="402.70">29</text>
<text x="874.50" y="428.95">1</text>
<text x="919.00" y="428.95">4</text>
<text x="963.50" y="428.95">1</text>
<text x="1008.00" y="428.95">7</text>
<text x="1052.50" y="428.95">2</text>
<text x="1097.00" y="428.95">0</text>
<text x="1141.50" y="428.95">23</text>
<text x="1186.00" y="428.95">0</text>
<text x="1230.50" y="428.95">0</text>
<text x="1275.00" y="428.95">25</text>
<text x="1319.50" y="428.95">2</text>
<text x="1364.00" y="428.95">7</text>
<text x="1408.50" y="428.95">30</text>
<text x="1453.00" y="428.95">0</text>
<text x="1497.50" y="428.95">0</text>
<text x="1542.00" y="428.95">0</text>
<text x="1586.50" y="428.95">1</text>
<text x="1631.00" y="428.95">0</text>
<text x="1675.50" y="428.95">2</text>
<text x="1720.00" y="428.95">3</text>
<text x="874.50" y="455.20">2</text>
<text x="919.00" y="455.20">6</text>
<text x="963.50" y="455.20">0</text>
<text x="1008.00" y="455.20">3</text>
<text x="1052.50" y="455.20">1</text>
<text x="1097.00" y="455.20">0</text>
<text x="1141.50" y="455.20">17</text>
<text x="1186.00" y="455.20">0</text>
<text x="1230.50" y="455.20">0</text>
<text x="1275.00" y="455.20">20</text>
<text x="1319.50" y="455.20">1</text>
<text x="1364.00" y="455.20">4</text>
<text x="1408.50" y="455.20">22</text>
<text x="1453.00" y="455.20">0</text>
<text x="1497.50" y="455.20">1</text>
<text x="1542.00" y="455.20">0</text>
<text x="1586.50" y="455.20">1</text>
<text x="1631.00" y="455.20">2</text>
<text x="1675.50" y="455.20">0</text>
<text x="1720.00" y="455.20">0</text>
<text x="874.50" y="481.45">3</text>
<text x="919.00" y="481.45">6</text>
<text x="963.50" y="481.45">3</text>
<text x="1008.00" y="481.45">6</text>
<text x="1052.50" y="481.45">0</text>
<text x="1097.00" y="481.45">0</text>
<text x="1141.50" y="481.45">33</text>
<text x="1186.00" y="481.45">0</text>
<text x="1230.50" y="481.45">2</text>
<text x="1275.00" y="481.45">20</text>
<text x="1319.50" y="481.45">0</text>
<text x="1364.00" y="481.45">6</text>
<text x="1408.50" y="481.45">27</text>
<text x="1453.00" y="481.45">0</text>
<text x="1497.50" y="481.45">0</text>
<text x="1542.00" y="481.45">0</text>
<text x="1586.50" y="481.45">0</text>
<text x="1631.00" y="481.45">2</text>
<text x="1675.50" y="481.45">1</text>
<text x="1720.00" y="481.45">2</text>
</g>
<g font-family="&quot;Liberation Sans&quot;, sans-serif" font-size="12.5" font-weight="700" fill="#000" text-anchor="middle" stroke="#000" stroke-width="0.45">
<text x="874.50" y="245.20">3</text>
<text x="919.00" y="245.20">9</text>
<text x="963.50" y="245.20">0</text>
<text x="1008.00" y="245.20">3</text>
<text x="1052.50" y="245.20">1</text>
<text x="1097.00" y="245.20">1</text>
<text x="1141.50" y="245.20">22</text>
<text x="1186.00" y="245.20">0</text>
<text x="1230.50" y="245.20">0</text>
<text x="1275.00" y="245.20">23</text>
<text x="1319.50" y="245.20">1</text>
<text x="1364.00" y="245.20">6</text>
<text x="1408.50" y="245.20">27</text>
<text x="1453.00" y="245.20">0</text>
<text x="1497.50" y="245.20">0</text>
<text x="1542.00" y="245.20">0</text>
<text x="1586.50" y="245.20">2</text>
<text x="1631.00" y="245.20">1</text>
<text x="1675.50" y="245.20">2</text>
<text x="1720.00" y="245.20">3</text>
<text x="874.50" y="271.45">1</text>
<text x="919.00" y="271.45">4</text>
<text x="963.50" y="271.45">2</text>
<text x="1008.00" y="271.45">8</text>
<text x="1052.50" y="271.45">3</text>
<text x="1097.00" y="271.45">0</text>
<text x="1141.50" y="271.45">22</text>
<text x="1186.00" y="271.45">2</text>
<text x="1230.50" y="271.45">2</text>
<text x="1275.00" y="271.45">28</text>
<text x="1319.50" y="271.45">0</text>
<text x="1364.00" y="271.45">8</text>
<text x="1408.50" y="271.45">27</text>
<text x="1453.00" y="271.45">0</text>
<text x="1497.50" y="271.45">0</text>
<text x="1542.00" y="271.45">0</text>
<text x="1586.50" y="271.45">0</text>
<text x="1631.00" y="271.45">1</text>
<text x="1675.50" y="271.45">0</text>
<text x="1720.00" y="271.45">0</text>
<text x="874.50" y="297.70">10</text>
<text x="919.00" y="297.70">0</text>
<text x="963.50" y="297.70">9</text>
<text x="1008.00" y="297.70">0</text>
<text x="1052.50" y="297.70">10</text>
<text x="1097.00" y="297.70">34</text>
<text x="1141.50" y="297.70">8</text>
<text x="1186.00" y="297.70">27</text>
<text x="1230.50" y="297.70">9</text>
<text x="1275.00" y="297.70">6</text>
<text x="1319.50" y="297.70">12</text>
<text x="1364.00" y="297.70">0</text>
<text x="1408.50" y="297.70">5</text>
<text x="1453.00" y="297.70">0</text>
<text x="1497.50" y="297.70">38</text>
<text x="1542.00" y="297.70">0</text>
<text x="1586.50" y="297.70">11</text>
<text x="1631.00" y="297.70">7</text>
<text x="1675.50" y="297.70">6</text>
<text x="1720.00" y="297.70">15</text>
<text x="874.50" y="323.95">31</text>
<text x="919.00" y="323.95">1</text>
<text x="963.50" y="323.95">26</text>
<text x="1008.00" y="323.95">0</text>
<text x="1052.50" y="323.95">33</text>
<text x="1097.00" y="323.95">42</text>
<text x="1141.50" y="323.95">0</text>
<text x="1186.00" y="323.95">42</text>
<text x="1230.50" y="323.95">36</text>
<text x="1275.00" y="323.95">0</text>
<text x="1319.50" y="323.95">29</text>
<text x="1364.00" y="323.95">0</text>
<text x="1408.50" y="323.95">1</text>
<text x="1453.00" y="323.95">0</text>
<text x="1497.50" y="323.95">41</text>
<text x="1542.00" y="323.95">0</text>
<text x="1586.50" y="323.95">37</text>
<text x="1631.00" y="323.95">30</text>
<text x="1675.50" y="323.95">30</text>
<text x="1720.00" y="323.95">18</text>
<text x="874.50" y="350.20">1</text>
<text x="919.00" y="350.20">8</text>
<text x="963.50" y="350.20">0</text>
<text x="1008.00" y="350.20">7</text>
<text x="1052.50" y="350.20">3</text>
<text x="1097.00" y="350.20">1</text>
<text x="1141.50" y="350.20">33</text>
<text x="1186.00" y="350.20">1</text>
<text x="1230.50" y="350.20">0</text>
<text x="1275.00" y="350.20">27</text>
<text x="1319.50" y="350.20">2</text>
<text x="1364.00" y="350.20">9</text>
<text x="1408.50" y="350.20">17</text>
<text x="1453.00" y="350.20">0</text>
<text x="1497.50" y="350.20">0</text>
<text x="1542.00" y="350.20">0</text>
<text x="1586.50" y="350.20">2</text>
<text x="1631.00" y="350.20">0</text>
<text x="1675.50" y="350.20">1</text>
<text x="1720.00" y="350.20">3</text>
<text x="874.50" y="376.45">0</text>
<text x="919.00" y="376.45">6</text>
<text x="963.50" y="376.45">4</text>
<text x="1008.00" y="376.45">11</text>
<text x="1052.50" y="376.45">1</text>
<text x="1097.00" y="376.45">1</text>
<text x="1141.50" y="376.45">27</text>
<text x="1186.00" y="376.45">1</text>
<text x="1230.50" y="376.45">0</text>
<text x="1275.00" y="376.45">28</text>
<text x="1319.50" y="376.45">1</text>
<text x="1364.00" y="376.45">6</text>
<text x="1408.50" y="376.45">25</text>
<text x="1453.00" y="376.45">0</text>
<text x="1497.50" y="376.45">0</text>
<text x="1542.00" y="376.45">0</text>
<text x="1586.50" y="376.45">0</text>
<text x="1631.00" y="376.45">2</text>
<text x="1675.50" y="376.45">2</text>
<text x="1720.00" y="376.45">1</text>
<text x="874.50" y="402.70">35</text>
<text x="919.00" y="402.70">1</text>
<text x="963.50" y="402.70">29</text>
<text x="1008.00" y="402.70">0</text>
<text x="1052.50" y="402.70">33</text>
<text x="1097.00" y="402.70">47</text>
<text x="1141.50" y="402.70">0</text>
<text x="1186.00" y="402.70">29</text>
<text x="1230.50" y="402.70">31</text>
<text x="1275.00" y="402.70">0</text>
<text x="1319.50" y="402.70">30</text>
<text x="1364.00" y="402.70">0</text>
<text x="1408.50" y="402.70">0</text>
<text x="1453.00" y="402.70">0</text>
<text x="1497.50" y="402.70">35</text>
<text x="1542.00" y="402.70">0</text>
<text x="1586.50" y="402.70">30</text>
<text x="1631.00" y="402.70">37</text>
<text x="1675.50" y="402.70">25</text>
<text x="1720.00" y="402.70">29</text>
<text x="874.50" y="428.95">1</text>
<text x="919.00" y="428.95">4</text>
<text x="963.50" y="428.95">1</text>
<text x="1008.00" y="428.95">7</text>
<text x="1052.50" y="428.95">2</text>
<text x="1097.00" y="428.95">0</text>
<text x="1141.50" y="428.95">23</text>
<text x="1186.00" y="428.95">0</text>
<text x="1230.50" y="428.95">0</text>
<text x="1275.00" y="428.95">25</text>
<text x="1319.50" y="428.95">2</text>
<text x="1364.00" y="428.95">7</text>
<text x="1408.50" y="428.95">30</text>
<text x="1453.00" y="428.95">0</text>
<text x="1497.50" y="428.95">0</text>
<text x="1542.00" y="428.95">0</text>
<text x="1586.50" y="428.95">1</text>
<text x="1631.00" y="428.95">0</text>
<text x="1675.50" y="428.95">2</text>
<text x="1720.00" y="428.95">3</text>
<text x="874.50" y="455.20">2</text>
<text x="919.00" y="455.20">6</text>
<text x="963.50" y="455.20">0</text>
<text x="1008.00" y="455.20">3</text>
<text x="1052.50" y="455.20">1</text>
<text x="1097.00" y="455.20">0</text>
<text x="1141.50" y="455.20">17</text>
<text x="1186.00" y="455.20">0</text>
<text x="1230.50" y="455.20">0</text>
<text x="1275.00" y="455.20">20</text>
<text x="1319.50" y="455.20">1</text>
<text x="1364.00" y="455.20">4</text>
<text x="1408.50" y="455.20">22</text>
<text x="1453.00" y="455.20">0</text>
<text x="1497.50" y="455.20">1</text>
<text x="1542.00" y="455.20">0</text>
<text x="1586.50" y="455.20">1</text>
<text x="1631.00" y="455.20">2</text>
<text x="1675.50" y="455.20">0</text>
<text x="1720.00" y="455.20">0</text>
<text x="874.50" y="481.45">3</text>
<text x="919.00" y="481.45">6</text>
<text x="963.50" y="481.45">3</text>
<text x="1008.00" y="481.45">6</text>
<text x="1052.50" y="481.45">0</text>
<text x="1097.00" y="481.45">0</text>
<text x="1141.50" y="481.45">33</text>
<text x="1186.00" y="481.45">0</text>
<text x="1230.50" y="481.45">2</text>
<text x="1275.00" y="481.45">20</text>
<text x="1319.50" y="481.45">0</text>
<text x="1364.00" y="481.45">6</text>
<text x="1408.50" y="481.45">27</text>
<text x="1453.00" y="481.45">0</text>
<text x="1497.50" y="481.45">0</text>
<text x="1542.00" y="481.45">0</text>
<text x="1586.50" y="481.45">0</text>
<text x="1631.00" y="481.45">2</text>
<text x="1675.50" y="481.45">1</text>
<text x="1720.00" y="481.45">2</text>
</g>
<defs><linearGradient id="lg" x1="0" y1="0" x2="0" y2="1"><stop offset="0" stop-color="#e9f0f3"/><stop offset="1" stop-color="#13728e"/></linearGradient></defs>
<rect x="1758.5" y="254.3" width="14.5" height="250.7" fill="url(#lg)"/>
<line x1="1758.5" y1="338.8" x2="1773" y2="338.8" stroke="rgba(255,255,255,0.6)" stroke-width="1.2"/>
<line x1="1758.5" y1="421.5" x2="1773" y2="421.5" stroke="rgba(255,255,255,0.6)" stroke-width="1.2"/>
<g font-family="&quot;Liberation Sans&quot;, sans-serif" font-size="12.5" fill="#666">
<text x="1791.5" y="259.5">0</text>
<text x="1791.5" y="343.5">100</text>
<text x="1791.5" y="426.0">200</text>
<text x="1791.5" y="509.5">300</text>
</g>
<g font-family="&quot;Liberation Sans&quot;, sans-serif" font-size="14.5" fill="#666" text-anchor="end">
<text x="831.8" y="245.50">Penn Osterwalder</text>
<text x="831.8" y="271.75">Miu Hanwan</text>
<text x="831.8" y="298.00">Maris Freeman</text>
<text x="831.8" y="324.25">Magdalena Predutta</text>
<text x="831.8" y="350.50">Kim Passa</text>
<text x="831.8" y="376.75">Immanuel Karagianni</text>
<text x="831.8" y="403.00">Francois de Perrier</text>
<text x="831.8" y="429.25">Fjodor Kowalski</text>
<text x="831.8" y="455.50">Christian Francois</text>
<text x="831.8" y="481.75">Anne Olwada</text>
</g>
<text x="0" y="0" font-family="&quot;Liberation Sans&quot;, sans-serif" font-size="13.5" fill="#666" text-anchor="middle" transform="translate(647.5 345.5) rotate(-90)">Resource</text>
<g font-family="&quot;Liberation Sans&quot;, sans-serif" font-size="14.5" fill="#666" text-anchor="end">
<text x="0" y="0" transform="translate(876.50 504) rotate(-45)">Anne Olwada</text>
<text x="0" y="0" transform="translate(921.00 504) rotate(-45)">Carmen Finacse</text>
<text x="0" y="0" transform="translate(965.50 504) rotate(-45)">Christian Francois</text>
<text x="0" y="0" transform="translate(1010.00 504) rotate(-45)">Esmeralda Clay</text>
<text x="0" y="0" transform="translate(1054.50 504) rotate(-45)">Fjodor Kowalski</text>
<text x="0" y="0" transform="translate(1099.00 504) rotate(-45)">Francis Odell</text>
<text x="0" y="0" transform="translate(1143.50 504) rotate(-45)">Francois de Perrier</text>
<text x="0" y="0" transform="translate(1188.00 504) rotate(-45)">Heinz Gutschmidt</text>
<text x="0" y="0" transform="translate(1232.50 504) rotate(-45)">Immanuel Karagianni</text>
<text x="0" y="0" transform="translate(1277.00 504) rotate(-45)">Karel de Groot</text>
<text x="0" y="0" transform="translate(1321.50 504) rotate(-45)">Kim Passa</text>
<text x="0" y="0" transform="translate(1366.00 504) rotate(-45)">Kiu Kan</text>
<text x="0" y="0" transform="translate(1410.50 504) rotate(-45)">Magdalena Predutta</text>
<text x="0" y="0" transform="translate(1455.00 504) rotate(-45)">Marcello Dumas</text>
<text x="0" y="0" transform="translate(1499.50 504) rotate(-45)">Maris Freeman</text>
<text x="0" y="0" transform="translate(1544.00 504) rotate(-45)">Marlon La Rosa</text>
<text x="0" y="0" transform="translate(1588.50 504) rotate(-45)">Miu Hanwan</text>
<text x="0" y="0" transform="translate(1633.00 504) rotate(-45)">Nico Ojenbeer</text>
<text x="0" y="0" transform="translate(1677.50 504) rotate(-45)">Penn Osterwalder</text>
<text x="0" y="0" transform="translate(1722.00 504) rotate(-45)">Tesca Lobes</text>
</g>
</svg>
</body></html>
